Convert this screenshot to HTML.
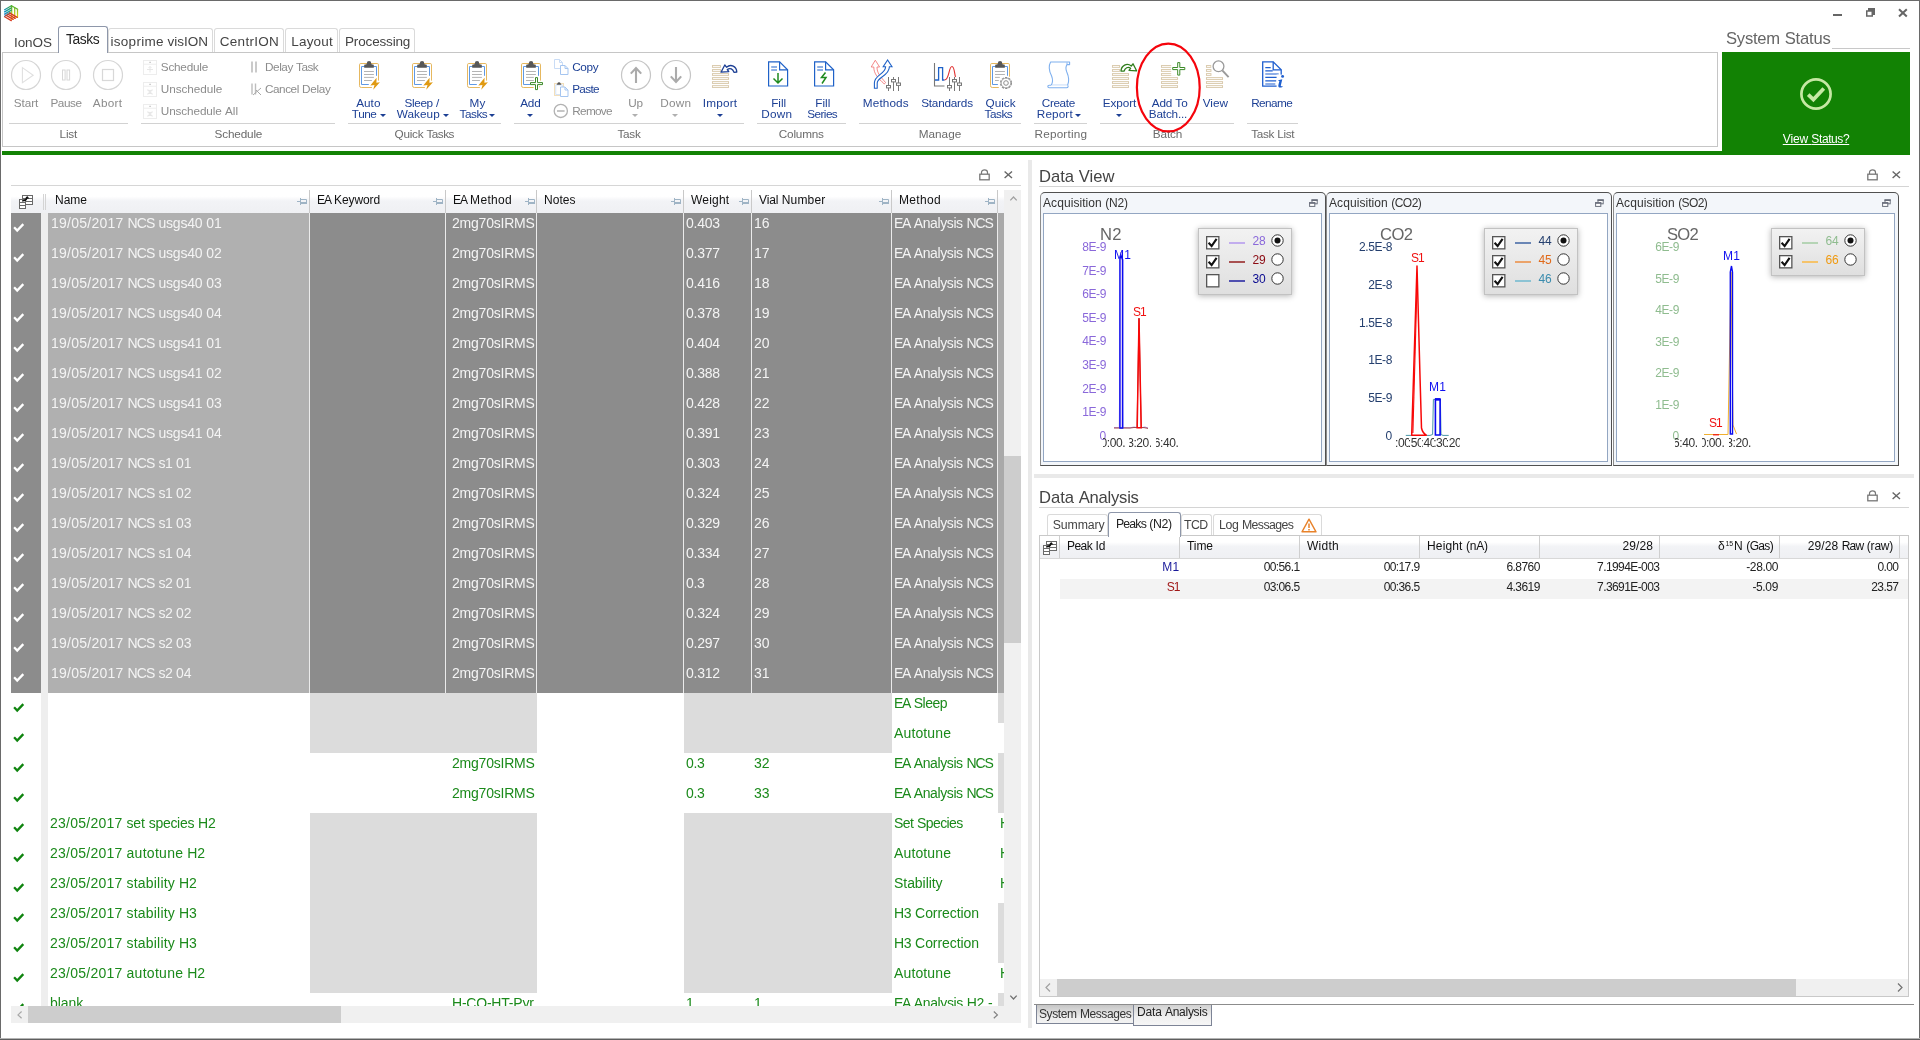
<!DOCTYPE html>
<html><head><meta charset="utf-8"><title>IonOS</title>
<style>
html,body{margin:0;padding:0;background:#fff;}
body{width:1920px;height:1040px;position:relative;overflow:hidden;font-family:"Liberation Sans",sans-serif;}
.t{position:absolute;white-space:nowrap;}
.r{position:absolute;box-sizing:border-box;}
svg{overflow:visible;}
</style></head><body><div id="root" style="position:absolute;left:0;top:0;width:1920px;height:1040px;will-change:transform;">

<div class="r" style="left:0px;top:0px;width:1920px;height:1px;background:#6a6a6a;"></div>
<div class="r" style="left:0px;top:0px;width:1px;height:1040px;background:#6a6a6a;"></div>
<div class="r" style="left:1919px;top:0px;width:1px;height:1040px;background:#6a6a6a;"></div>
<div class="r" style="left:0px;top:1039px;width:1920px;height:1px;background:#5e5e5e;"></div>
<div class="r" style="left:0px;top:1038px;width:1920px;height:1px;background:#b4b4b4;"></div>
<svg class="r" style="left:4px;top:5px;" width="15" height="17" viewBox="0 0 15 17"><defs>
<linearGradient id="lg1" x1="0" y1="1" x2="1" y2="0"><stop offset="0" stop-color="#0f82dc"/><stop offset="0.5" stop-color="#1f9a9a"/><stop offset="1" stop-color="#45ae35"/></linearGradient>
<linearGradient id="lg2" x1="0" y1="0" x2="0" y2="1"><stop offset="0" stop-color="#58b32a"/><stop offset="0.45" stop-color="#a8c81a"/><stop offset="1" stop-color="#f7d400"/></linearGradient>
</defs>
<g stroke-width="1.25" fill="none" stroke-linecap="round">
<path d="M7.5,0.7 L13.6,4.2" stroke="#58b32a"/>
<path d="M7.7,1 V14.4 M10.7,2.6 V13.4 M13.5,4.3 V12.4" stroke="url(#lg2)"/>
<path d="M0.6,4.7 L7.4,0.7 M0.6,6.9 L7.4,2.9 M0.6,9.1 L7.4,5.1 M0.6,11.3 L6.4,7.9" stroke="url(#lg1)"/>
<path d="M0.6,11.7 L7.3,15.6 M1.8,10.1 L9.2,14.4 M3.6,9 L11.2,13.4 M5.4,7.9 L13.2,12.4" stroke="#d8391d"/>
</g>
</svg>
<div class="r" style="left:1833px;top:14px;width:9px;height:2px;background:#666;"></div>
<svg class="r" style="left:1866px;top:8px;" width="9" height="9" viewBox="0 0 9 9"><rect x="2.5" y="0.5" width="6" height="6" fill="#666" stroke="#666"/><rect x="0.75" y="3" width="5.5" height="5" fill="#fff" stroke="#666" stroke-width="1.5"/></svg>
<svg class="r" style="left:1898px;top:8px;" width="10" height="10" viewBox="0 0 10 10"><path d="M1,1.2 L8.8,8.6 M8.8,1.2 L1,8.6" stroke="#666" stroke-width="2"/></svg>
<div class="r" style="left:108px;top:28px;width:105px;height:24px;background:#fff;border:1px solid #dadada;border-bottom:none;border-radius:3px 3px 0 0;"></div>
<div class="r" style="left:214px;top:28px;width:70px;height:24px;background:#fff;border:1px solid #dadada;border-bottom:none;border-radius:3px 3px 0 0;"></div>
<div class="r" style="left:285px;top:28px;width:53px;height:24px;background:#fff;border:1px solid #dadada;border-bottom:none;border-radius:3px 3px 0 0;"></div>
<div class="r" style="left:339px;top:28px;width:76px;height:24px;background:#fff;border:1px solid #dadada;border-bottom:none;border-radius:3px 3px 0 0;"></div>
<div class="r" style="left:2px;top:52px;width:1716px;height:95px;background:#fff;border:1px solid #c6c6c6;"></div>
<div class="r" style="left:58px;top:26px;width:50px;height:27px;background:#fff;border:1px solid #8e97aa;border-bottom:none;border-radius:3px 3px 0 0;z-index:3;"></div>
<div class="t" style="left:14.00px;top:33.00px;font-size:13.50px;line-height:19px;height:19px;color:#444;"><span style="letter-spacing:-0.086px">IonOS</span></div>
<div class="t" style="left:66.00px;top:30.00px;font-size:13.80px;line-height:19px;height:19px;color:#222;z-index:4;"><span style="letter-spacing:-0.395px">Tasks</span></div>
<div class="t" style="left:110.50px;top:32.00px;font-size:13.50px;line-height:19px;height:19px;color:#444;word-spacing:0.060px;"><span style="letter-spacing:0.281px">isoprime</span> <span style="letter-spacing:0.004px">visION</span></div>
<div class="t" style="left:219.80px;top:32.00px;font-size:13.50px;line-height:19px;height:19px;color:#444;"><span style="letter-spacing:0.273px">CentrION</span></div>
<div class="t" style="left:291.20px;top:32.00px;font-size:13.50px;line-height:19px;height:19px;color:#444;"><span style="letter-spacing:0.211px">Layout</span></div>
<div class="t" style="left:345.00px;top:32.00px;font-size:13.50px;line-height:19px;height:19px;color:#444;"><span style="letter-spacing:-0.158px">Processing</span></div>
<div class="t" style="left:1726.00px;top:27.00px;font-size:16.60px;line-height:23px;height:23px;color:#666;word-spacing:0.045px;"><span style="letter-spacing:-0.228px">System</span> <span style="letter-spacing:-0.171px">Status</span></div>
<div class="r" style="left:1832px;top:48px;width:78px;height:1px;background:#c8c8c8;"></div>
<div class="r" style="left:1722px;top:52px;width:188px;height:103px;background:#128204;"></div>
<div class="r" style="left:2px;top:151px;width:1721px;height:4px;background:#128204;"></div>
<svg class="r" style="left:1800px;top:78px;" width="32" height="32" viewBox="0 0 32 32"><circle cx="16" cy="16" r="14.6" fill="none" stroke="#c6e8a4" stroke-width="2.7"/><path d="M8.2,16.6 L13.4,21.6 L23.8,10.6" fill="none" stroke="#c6e8a4" stroke-width="3.7"/></svg>
<div class="t" style="left:1782.78px;top:130.00px;font-size:12.00px;line-height:18px;height:18px;color:#fff;word-spacing:-0.047px;text-decoration:underline;"><span style="letter-spacing:-0.129px">View</span> <span style="letter-spacing:-0.403px">Status?</span></div>
<div class="r" style="left:9px;top:123px;width:119px;height:1px;background:#d2d2d2;"></div>
<div class="t" style="left:59.50px;top:125.00px;font-size:11.75px;line-height:17px;height:17px;color:#6b6b6b;"><span style="letter-spacing:-0.146px">List</span></div>
<div class="r" style="left:141px;top:123px;width:194px;height:1px;background:#d2d2d2;"></div>
<div class="t" style="left:214.50px;top:125.00px;font-size:11.75px;line-height:17px;height:17px;color:#6b6b6b;"><span style="letter-spacing:-0.162px">Schedule</span></div>
<div class="r" style="left:348px;top:123px;width:153px;height:1px;background:#d2d2d2;"></div>
<div class="t" style="left:394.50px;top:125.00px;font-size:11.75px;line-height:17px;height:17px;color:#6b6b6b;word-spacing:-0.124px;"><span style="letter-spacing:-0.228px">Quick</span> <span style="letter-spacing:-0.554px">Tasks</span></div>
<div class="r" style="left:514px;top:123px;width:230px;height:1px;background:#d2d2d2;"></div>
<div class="t" style="left:617.50px;top:125.00px;font-size:11.75px;line-height:17px;height:17px;color:#6b6b6b;"><span style="letter-spacing:-0.290px">Task</span></div>
<div class="r" style="left:757px;top:123px;width:89px;height:1px;background:#d2d2d2;"></div>
<div class="t" style="left:778.80px;top:125.00px;font-size:11.75px;line-height:17px;height:17px;color:#6b6b6b;"><span style="letter-spacing:-0.195px">Columns</span></div>
<div class="r" style="left:859px;top:123px;width:162px;height:1px;background:#d2d2d2;"></div>
<div class="t" style="left:918.80px;top:125.00px;font-size:11.75px;line-height:17px;height:17px;color:#6b6b6b;"><span style="letter-spacing:-0.011px">Manage</span></div>
<div class="r" style="left:1034px;top:123px;width:53px;height:1px;background:#d2d2d2;"></div>
<div class="t" style="left:1034.50px;top:125.00px;font-size:11.75px;line-height:17px;height:17px;color:#6b6b6b;"><span style="letter-spacing:0.195px">Reporting</span></div>
<div class="r" style="left:1100px;top:123px;width:134px;height:1px;background:#d2d2d2;"></div>
<div class="t" style="left:1152.80px;top:125.00px;font-size:11.75px;line-height:17px;height:17px;color:#6b6b6b;"><span style="letter-spacing:-0.129px">Batch</span></div>
<div class="r" style="left:1247px;top:123px;width:51px;height:1px;background:#d2d2d2;"></div>
<div class="t" style="left:1251.20px;top:125.00px;font-size:11.75px;line-height:17px;height:17px;color:#6b6b6b;word-spacing:-0.077px;"><span style="letter-spacing:-0.356px">Task</span> <span style="letter-spacing:-0.277px">List</span></div>
<svg class="r" style="left:10px;top:59px;" width="32" height="32" viewBox="0 0 32 32"><circle cx="16" cy="16" r="14.5" fill="#fff" stroke="#d6d6d6" stroke-width="1.2"/><path d="M12.4,8.6 L23.2,16.2 L12.4,23.6 Z" fill="none" stroke="#e0e0e0" stroke-width="1.1"/></svg>
<svg class="r" style="left:50px;top:59px;" width="32" height="32" viewBox="0 0 32 32"><circle cx="16" cy="16" r="14.5" fill="#fff" stroke="#d6d6d6" stroke-width="1.2"/><rect x="12.5" y="11" width="2.6" height="10" fill="none" stroke="#d8d8d8"/><rect x="17" y="11" width="2.6" height="10" fill="none" stroke="#d8d8d8"/></svg>
<svg class="r" style="left:92px;top:59px;" width="32" height="32" viewBox="0 0 32 32"><circle cx="16" cy="16" r="14.5" fill="#fff" stroke="#d6d6d6" stroke-width="1.2"/><rect x="10.5" y="10.5" width="11" height="11" fill="none" stroke="#d8d8d8" stroke-width="1.2"/></svg>
<div class="t" style="left:13.80px;top:94.00px;font-size:11.75px;line-height:17px;height:17px;color:#8c8c8c;"><span style="letter-spacing:-0.083px">Start</span></div>
<div class="t" style="left:50.50px;top:94.00px;font-size:11.75px;line-height:17px;height:17px;color:#8c8c8c;"><span style="letter-spacing:-0.464px">Pause</span></div>
<div class="t" style="left:92.80px;top:94.00px;font-size:11.75px;line-height:17px;height:17px;color:#8c8c8c;"><span style="letter-spacing:0.263px">Abort</span></div>
<svg class="r" style="left:143px;top:60px;" width="15" height="15" viewBox="0 0 15 15"><rect x="0.5" y="0.5" width="13" height="14" fill="#fff" stroke="#ededed"/><path d="M0.5,4.2 H13.5" stroke="#ededed"/><path d="M7,6.5 V12.5 M4,9.5 H10 M5.5,8 L7,6.5 L8.5,8" fill="none" stroke="#e4e4e4" stroke-width="0.9"/><rect x="6.2" y="1.8" width="1.8" height="0.9" fill="#b8b8b8"/></svg>
<svg class="r" style="left:143px;top:82px;" width="15" height="15" viewBox="0 0 15 15"><rect x="0.5" y="0.5" width="13" height="14" fill="#fff" stroke="#ededed"/><path d="M0.5,4.2 H13.5" stroke="#ededed"/><path d="M4.5,8 L9.5,12 M9.5,8 L4.5,12 M4.5,8 Q7,9.2 9.5,8 M4.5,12 Q7,10.8 9.5,12" fill="none" stroke="#e4e4e4" stroke-width="0.9"/><rect x="6.2" y="1.8" width="1.8" height="0.9" fill="#b8b8b8"/></svg>
<svg class="r" style="left:143px;top:104px;" width="15" height="15" viewBox="0 0 15 15"><rect x="0.5" y="0.5" width="13" height="14" fill="#fff" stroke="#ededed"/><path d="M0.5,4.2 H13.5" stroke="#ededed"/><path d="M4.5,8 L9.5,12 M9.5,8 L4.5,12 M4.5,8 Q7,9.2 9.5,8 M4.5,12 Q7,10.8 9.5,12" fill="none" stroke="#e4e4e4" stroke-width="0.9"/><rect x="6.2" y="1.8" width="1.8" height="0.9" fill="#b8b8b8"/></svg>
<div class="t" style="left:160.80px;top:58.00px;font-size:11.75px;line-height:17px;height:17px;color:#8c8c8c;"><span style="letter-spacing:-0.225px">Schedule</span></div>
<div class="t" style="left:160.80px;top:80.00px;font-size:11.75px;line-height:17px;height:17px;color:#8c8c8c;"><span style="letter-spacing:-0.066px">Unschedule</span></div>
<div class="t" style="left:160.80px;top:102.00px;font-size:11.75px;line-height:17px;height:17px;color:#8c8c8c;word-spacing:-0.028px;"><span style="letter-spacing:-0.124px">Unschedule</span> <span style="letter-spacing:0.095px">All</span></div>
<svg class="r" style="left:251px;top:61px;" width="8" height="12" viewBox="0 0 8 12"><path d="M1,0.5 V11.5 M5,0.5 V11.5" stroke="#bdbdbd" stroke-width="1.6"/></svg>
<svg class="r" style="left:251px;top:83px;" width="11" height="13" viewBox="0 0 11 13"><path d="M1,0.5 V11.5 M4.5,0.5 V11.5" stroke="#bdbdbd" stroke-width="1.4"/><path d="M2,12 L10,5 M5,7 L10,12" stroke="#a8a8a8" stroke-width="1"/></svg>
<div class="t" style="left:265.00px;top:58.00px;font-size:11.75px;line-height:17px;height:17px;color:#8c8c8c;word-spacing:-0.154px;"><span style="letter-spacing:-0.428px">Delay</span> <span style="letter-spacing:-0.493px">Task</span></div>
<div class="t" style="left:265.00px;top:80.00px;font-size:11.75px;line-height:17px;height:17px;color:#8c8c8c;word-spacing:-0.090px;"><span style="letter-spacing:-0.455px">Cancel</span> <span style="letter-spacing:-0.313px">Delay</span></div>
<svg class="r" style="left:358px;top:60px;" width="24" height="30" viewBox="0 0 24 30"><path d="M13.9,27.5 H3.3 Q1.5,27.5 1.5,25.7 V4.8 Q1.5,3.5 2.8,3.5 H19.2 Q20.5,3.5 20.5,4.8 V20.6" fill="none" stroke="#e6b860" stroke-width="1"/>
<path d="M10.8,24.5 H3.5 V6.5 H18.5 V15.8" fill="none" stroke="#5f99e4" stroke-width="1"/>
<path d="M6.2,7.7 V4.7 L8.5,4.2 L9.4,1.6 Q11,0.4 12.7,1.6 L13.5,4.2 L15.8,4.7 V7.7 Z" fill="#575757"/>
<path d="M6,11.5 H15.9 M6,14.5 H15.9 M6,17.4 H15.9 M6,20.5 H13.9" stroke="#b4b4b4" stroke-width="1"/><path d="M18.6,17.8 L12.3,25.5 L16.5,25 L15.2,29.8 L21.9,22.2 L18.4,22.7 Z" fill="#e09a12"/></svg>
<svg class="r" style="left:411px;top:60px;" width="24" height="30" viewBox="0 0 24 30"><path d="M13.9,27.5 H3.3 Q1.5,27.5 1.5,25.7 V4.8 Q1.5,3.5 2.8,3.5 H19.2 Q20.5,3.5 20.5,4.8 V20.6" fill="none" stroke="#e6b860" stroke-width="1"/>
<path d="M10.8,24.5 H3.5 V6.5 H18.5 V15.8" fill="none" stroke="#5f99e4" stroke-width="1"/>
<path d="M6.2,7.7 V4.7 L8.5,4.2 L9.4,1.6 Q11,0.4 12.7,1.6 L13.5,4.2 L15.8,4.7 V7.7 Z" fill="#575757"/>
<path d="M6,11.5 H15.9 M6,14.5 H15.9 M6,17.4 H15.9 M6,20.5 H13.9" stroke="#b4b4b4" stroke-width="1"/><path d="M18.6,17.8 L12.3,25.5 L16.5,25 L15.2,29.8 L21.9,22.2 L18.4,22.7 Z" fill="#e09a12"/></svg>
<svg class="r" style="left:466px;top:60px;" width="24" height="30" viewBox="0 0 24 30"><path d="M13.9,27.5 H3.3 Q1.5,27.5 1.5,25.7 V4.8 Q1.5,3.5 2.8,3.5 H19.2 Q20.5,3.5 20.5,4.8 V20.6" fill="none" stroke="#e6b860" stroke-width="1"/>
<path d="M10.8,24.5 H3.5 V6.5 H18.5 V15.8" fill="none" stroke="#5f99e4" stroke-width="1"/>
<path d="M6.2,7.7 V4.7 L8.5,4.2 L9.4,1.6 Q11,0.4 12.7,1.6 L13.5,4.2 L15.8,4.7 V7.7 Z" fill="#575757"/>
<path d="M6,11.5 H15.9 M6,14.5 H15.9 M6,17.4 H15.9 M6,20.5 H13.9" stroke="#b4b4b4" stroke-width="1"/><path d="M18.6,17.8 L12.3,25.5 L16.5,25 L15.2,29.8 L21.9,22.2 L18.4,22.7 Z" fill="#e09a12"/></svg>
<svg class="r" style="left:520px;top:60px;" width="24" height="30" viewBox="0 0 24 30"><path d="M13.6,27.5 H3.3 Q1.5,27.5 1.5,25.7 V4.8 Q1.5,3.5 2.8,3.5 H19.2 Q20.5,3.5 20.5,4.8 V20.6" fill="none" stroke="#e6b860" stroke-width="1"/>
<path d="M10.8,24.5 H3.5 V6.5 H18.5 V15.8" fill="none" stroke="#5f99e4" stroke-width="1"/>
<path d="M6.2,7.7 V4.7 L8.5,4.2 L9.4,1.6 Q11,0.4 12.7,1.6 L13.5,4.2 L15.8,4.7 V7.7 Z" fill="#575757"/>
<path d="M6,11.5 H15.9 M6,14.5 H15.9 M6,17.4 H13.8 M6,20.5 H13.8" stroke="#b4b4b4" stroke-width="1"/><path d="M15.5,17.6 h2 v5 h5 v2 h-5 v5 h-2 v-5 h-5 v-2 h5 z" fill="#fff" stroke="#3c8a28" stroke-width="1"/><path d="M19,26.2 h1.5 l-1.5,1.5 z" fill="#e9bf6f"/></svg>
<div class="t" style="left:356.20px;top:94.00px;font-size:11.75px;line-height:17px;height:17px;color:#1c3f94;"><span style="letter-spacing:0.032px">Auto</span></div>
<div class="t" style="left:351.80px;top:105.00px;font-size:11.75px;line-height:17px;height:17px;color:#1c3f94;"><span style="letter-spacing:-0.412px">Tune</span></div>
<svg class="r" style="left:379.5px;top:113.5px;" width="6" height="3" viewBox="0 0 6 3"><path d="M0,0 H6 L3,3 Z" fill="#1c3f94"/></svg>
<div class="t" style="left:404.50px;top:94.00px;font-size:11.75px;line-height:17px;height:17px;color:#1c3f94;word-spacing:-0.053px;"><span style="letter-spacing:-0.367px">Sleep</span> <span style="letter-spacing:1.304px">/</span></div>
<div class="t" style="left:396.80px;top:105.00px;font-size:11.75px;line-height:17px;height:17px;color:#1c3f94;"><span style="letter-spacing:0.055px">Wakeup</span></div>
<svg class="r" style="left:442.8px;top:113.5px;" width="6" height="3" viewBox="0 0 6 3"><path d="M0,0 H6 L3,3 Z" fill="#1c3f94"/></svg>
<div class="t" style="left:469.50px;top:94.00px;font-size:11.75px;line-height:17px;height:17px;color:#1c3f94;"><span style="letter-spacing:0.168px">My</span></div>
<div class="t" style="left:459.50px;top:105.00px;font-size:11.75px;line-height:17px;height:17px;color:#1c3f94;"><span style="letter-spacing:-0.467px">Tasks</span></div>
<svg class="r" style="left:489px;top:113.5px;" width="6" height="3" viewBox="0 0 6 3"><path d="M0,0 H6 L3,3 Z" fill="#1c3f94"/></svg>
<div class="t" style="left:520.20px;top:94.00px;font-size:11.75px;line-height:17px;height:17px;color:#1c3f94;"><span style="letter-spacing:-0.203px">Add</span></div>
<svg class="r" style="left:527px;top:114.0px;" width="6" height="3" viewBox="0 0 6 3"><path d="M0,0 H6 L3,3 Z" fill="#1c3f94"/></svg>
<svg class="r" style="left:554px;top:59px;" width="15" height="17" viewBox="0 0 15 17"><path d="M0.5,0.5 h5 l3,3 v6 h-8 z" fill="#fff" stroke="#c9dcf6"/><path d="M5.5,0.5 v3 h3" fill="none" stroke="#c9dcf6"/><path d="M6.5,6.5 h4.5 l3,3 v6 h-7.5 z" fill="#fff" stroke="#a5c5f0"/><path d="M11,6.5 v3 h3" fill="none" stroke="#a5c5f0"/></svg>
<svg class="r" style="left:554px;top:81px;" width="15" height="17" viewBox="0 0 15 17"><rect x="0.5" y="2.5" width="9" height="12" fill="#fff" stroke="#f3dfbb"/><rect x="1.8" y="4" width="6.5" height="9.5" fill="#fff" stroke="#c9dcf6" stroke-width="0.8"/><path d="M2.5,3.8 L4,1.6 Q5,0.8 6,1.6 L7.5,3.8 Z" fill="#555"/><path d="M6.5,6 h4.5 l3,3 v6.5 h-7.5 z" fill="#fff" stroke="#a5c5f0"/><path d="M11,6 v3 h3" fill="none" stroke="#a5c5f0"/></svg>
<svg class="r" style="left:553px;top:103px;" width="16" height="16" viewBox="0 0 16 16"><circle cx="7.8" cy="7.9" r="6.6" fill="#fff" stroke="#b2b2b2" stroke-width="1.3"/><path d="M4,8 H11.6" stroke="#c0c0c0" stroke-width="1.8"/></svg>
<div class="t" style="left:572.20px;top:58.00px;font-size:11.75px;line-height:17px;height:17px;color:#1c3f94;"><span style="letter-spacing:-0.333px">Copy</span></div>
<div class="t" style="left:572.20px;top:80.00px;font-size:11.75px;line-height:17px;height:17px;color:#1c3f94;"><span style="letter-spacing:-0.669px">Paste</span></div>
<div class="t" style="left:572.30px;top:102.00px;font-size:11.75px;line-height:17px;height:17px;color:#8c8c8c;"><span style="letter-spacing:-0.692px">Remove</span></div>
<svg class="r" style="left:620px;top:59px;" width="32" height="32" viewBox="0 0 32 32"><circle cx="16" cy="16" r="14.5" fill="#fff" stroke="#c6c6c6" stroke-width="1.2"/><path d="M16,23.9 V9 M10.8,14.6 L16,9 L21.2,14.6" fill="none" stroke="#ababab" stroke-width="2.1" stroke-linejoin="miter"/></svg>
<svg class="r" style="left:660px;top:59px;" width="32" height="32" viewBox="0 0 32 32"><circle cx="16" cy="16" r="14.5" fill="#fff" stroke="#c6c6c6" stroke-width="1.2"/><path d="M16,8.1 V23 M10.8,17.4 L16,23 L21.2,17.4" fill="none" stroke="#ababab" stroke-width="2.1" stroke-linejoin="miter"/></svg>
<div class="t" style="left:628.30px;top:94.00px;font-size:11.75px;line-height:17px;height:17px;color:#8c8c8c;"><span style="letter-spacing:-0.310px">Up</span></div>
<svg class="r" style="left:632px;top:114.0px;" width="6" height="3" viewBox="0 0 6 3"><path d="M0,0 H6 L3,3 Z" fill="#b0b0b0"/></svg>
<div class="t" style="left:660.20px;top:94.00px;font-size:11.75px;line-height:17px;height:17px;color:#8c8c8c;"><span style="letter-spacing:0.240px">Down</span></div>
<svg class="r" style="left:672px;top:114.0px;" width="6" height="3" viewBox="0 0 6 3"><path d="M0,0 H6 L3,3 Z" fill="#b0b0b0"/></svg>
<svg class="r" style="left:712px;top:65px;" width="18" height="24" viewBox="0 0 18 24"><rect x="0.45" y="0.55" width="8" height="1.8" fill="#fff" stroke="#d9c9ab" stroke-width="0.95"/><rect x="0.45" y="4.57" width="8" height="1.8" fill="#fff" stroke="#d9c9ab" stroke-width="0.95"/><rect x="0.45" y="8.59" width="16.1" height="1.8" fill="#fff" stroke="#d9c9ab" stroke-width="0.95"/><rect x="0.45" y="12.61" width="16.1" height="1.8" fill="#fff" stroke="#d9c9ab" stroke-width="0.95"/><rect x="0.45" y="16.63" width="16.1" height="1.8" fill="#fff" stroke="#d9c9ab" stroke-width="0.95"/><rect x="0.45" y="20.65" width="16.1" height="1.8" fill="#fff" stroke="#d9c9ab" stroke-width="0.95"/></svg>
<svg class="r" style="left:719px;top:62px;" width="20" height="13" viewBox="0 0 20 13"><path d="M17.8,10 C17.5,4.5 12,1.5 7.5,5.2 L5.8,3 L2,10.2 L9.8,9.6 L8.3,7.5 C11,5.6 14,7 15,10.4 Z" fill="#fff" stroke="#1c3f94" stroke-width="1.3" stroke-linejoin="round"/></svg>
<div class="t" style="left:702.80px;top:94.00px;font-size:11.75px;line-height:17px;height:17px;color:#1c3f94;"><span style="letter-spacing:0.183px">Import</span></div>
<svg class="r" style="left:717px;top:114.0px;" width="6" height="3" viewBox="0 0 6 3"><path d="M0,0 H6 L3,3 Z" fill="#1c3f94"/></svg>
<svg class="r" style="left:768px;top:61px;" width="21" height="27" viewBox="0 0 21 27"><path d="M0.6,0.8 h11 l8,8 v16.2 h-19 z" fill="#fff" stroke="#1f62c8" stroke-width="1.2"/><path d="M11.6,0.8 v8 h8" fill="none" stroke="#1f62c8" stroke-width="1.2"/><path d="M3.2,6 h5.8 M3.2,9 h5.8" stroke="#1f62c8" stroke-width="1.1"/><path d="M10,12 V21.5 M5.5,17.5 L10,22 L14.5,17.5" fill="none" stroke="#1e8a1e" stroke-width="1.5"/></svg>
<svg class="r" style="left:814px;top:61px;" width="21" height="27" viewBox="0 0 21 27"><path d="M0.6,0.8 h11 l8,8 v16.2 h-19 z" fill="#fff" stroke="#1f62c8" stroke-width="1.2"/><path d="M11.6,0.8 v8 h8" fill="none" stroke="#1f62c8" stroke-width="1.2"/><path d="M3.2,6 h5.8 M3.2,9 h5.8" stroke="#1f62c8" stroke-width="1.1"/><path d="M11.5,11.5 L7.5,16.5 H12 L8,22.5" fill="none" stroke="#1e8a1e" stroke-width="1.5"/></svg>
<div class="t" style="left:771.20px;top:94.00px;font-size:11.75px;line-height:17px;height:17px;color:#1c3f94;"><span style="letter-spacing:-0.002px">Fill</span></div>
<div class="t" style="left:761.20px;top:105.00px;font-size:11.75px;line-height:17px;height:17px;color:#1c3f94;"><span style="letter-spacing:0.240px">Down</span></div>
<div class="t" style="left:815.20px;top:94.00px;font-size:11.75px;line-height:17px;height:17px;color:#1c3f94;"><span style="letter-spacing:0.073px">Fill</span></div>
<div class="t" style="left:807.20px;top:105.00px;font-size:11.75px;line-height:17px;height:17px;color:#1c3f94;"><span style="letter-spacing:-0.551px">Series</span></div>
<svg class="r" style="left:870px;top:59px;" width="24" height="31" viewBox="0 0 24 31"><path d="M3.8,8 H1.2 L5.3,1.2 L9.6,8 H7 C7,14 10,17 15.5,23.5 L14.3,25 C8,19 3.8,15 3.8,8 Z" fill="#fff" stroke="#f27c7c" stroke-width="0.9" stroke-linejoin="round"/><path d="M4.4,29.3 V24 C4.4,16 15.6,15 15.6,7.8 H13.2 L17.6,1 L22,7.8 H19.4 C19.4,17 7.2,18 7.2,24 V29.3 Z" fill="#fff" stroke="#1f62c8" stroke-width="1.1" stroke-linejoin="miter"/></svg>
<svg class="r" style="left:886px;top:77px;" width="15" height="14" viewBox="0 0 15 14"><path d="M2.5,0 V14 M7.5,0 V14 M12.5,0 V14" stroke="#777" stroke-width="1"/><rect x="0.5" y="8.5" width="4" height="2.4" fill="#fff" stroke="#777"/><rect x="5.5" y="2.5" width="4" height="2.4" fill="#fff" stroke="#777"/><rect x="10.5" y="6" width="4" height="2.4" fill="#fff" stroke="#777"/></svg>
<div class="t" style="left:862.80px;top:94.00px;font-size:11.75px;line-height:17px;height:17px;color:#1c3f94;"><span style="letter-spacing:0.133px">Methods</span></div>
<svg class="r" style="left:933px;top:62px;" width="30" height="28" viewBox="0 0 30 28"><path d="M1.5,1 V24 H11.5" fill="none" stroke="#777" stroke-width="1.1"/><path d="M2,18 H5.6 V5.6 H9.6 V18 H11.5" fill="none" stroke="#1f62c8" stroke-width="1.3"/><path d="M11.5,18 C16.5,18 15.5,4.5 19,4.5 C21.5,4.5 21.5,12.5 22.5,15" fill="none" stroke="#e03030" stroke-width="1.1"/></svg>
<svg class="r" style="left:947px;top:77px;" width="15" height="14" viewBox="0 0 15 14"><path d="M2.5,0 V14 M7.5,0 V14 M12.5,0 V14" stroke="#777" stroke-width="1"/><rect x="0.5" y="8.5" width="4" height="2.4" fill="#fff" stroke="#777"/><rect x="5.5" y="2.5" width="4" height="2.4" fill="#fff" stroke="#777"/><rect x="10.5" y="6" width="4" height="2.4" fill="#fff" stroke="#777"/></svg>
<div class="t" style="left:921.20px;top:94.00px;font-size:11.75px;line-height:17px;height:17px;color:#1c3f94;"><span style="letter-spacing:-0.218px">Standards</span></div>
<svg class="r" style="left:989px;top:60px;" width="24" height="30" viewBox="0 0 24 30"><path d="M9.8,27.5 H3.3 Q1.5,27.5 1.5,25.7 V4.8 Q1.5,3.5 2.8,3.5 H19.2 Q20.5,3.5 20.5,4.8 V16.7" fill="none" stroke="#e6b860" stroke-width="1"/>
<path d="M8.9,24.5 H3.5 V6.5 H18.5 V15.8" fill="none" stroke="#5f99e4" stroke-width="1"/>
<path d="M6.2,7.7 V4.7 L8.5,4.2 L9.4,1.6 Q11,0.4 12.7,1.6 L13.5,4.2 L15.8,4.7 V7.7 Z" fill="#575757"/>
<path d="M6,11.5 H15.9 M6,14.5 H15.9 M6,17.4 H10.8 M6,20.5 H9.8" stroke="#b4b4b4" stroke-width="1"/><circle cx="17" cy="23" r="5.4" fill="#fff" stroke="#8e8e8e" stroke-width="1.3" stroke-dasharray="2.3 1.1"/><circle cx="17" cy="23" r="4.8" fill="none" stroke="#9a9a9a" stroke-width="0.7"/><circle cx="17" cy="23" r="2.3" fill="#fff" stroke="#8e8e8e" stroke-width="1"/></svg>
<div class="t" style="left:985.50px;top:94.00px;font-size:11.75px;line-height:17px;height:17px;color:#1c3f94;"><span style="letter-spacing:-0.007px">Quick</span></div>
<div class="t" style="left:984.50px;top:105.00px;font-size:11.75px;line-height:17px;height:17px;color:#1c3f94;"><span style="letter-spacing:-0.467px">Tasks</span></div>
<svg class="r" style="left:1047px;top:61px;" width="24" height="28" viewBox="0 0 24 28"><path d="M3.6,1 C0.8,6 2,10 4.6,15 C6.2,19 5.6,22 4.2,24.3 H20.6 C22.8,19 21.6,15 19.8,11 C18.4,7.5 19,5 20,3.6 L22.6,3.6 L22.6,1 Z" fill="#fff" stroke="#7fb0ee" stroke-width="1.1" stroke-linejoin="round"/><path d="M20,3.6 V1.4" stroke="#7fb0ee" stroke-width="0.9"/><path d="M4.2,24.3 H2.2 C0.4,24.3 0.4,26.7 2.2,26.7 H19.6 C21.2,26.7 21.6,25.3 20.6,24.3" fill="#fff" stroke="#7fb0ee" stroke-width="1.1"/></svg>
<div class="t" style="left:1041.80px;top:94.00px;font-size:11.75px;line-height:17px;height:17px;color:#1c3f94;"><span style="letter-spacing:-0.378px">Create</span></div>
<div class="t" style="left:1036.80px;top:105.00px;font-size:11.75px;line-height:17px;height:17px;color:#1c3f94;"><span style="letter-spacing:0.122px">Report</span></div>
<svg class="r" style="left:1074.5px;top:113.5px;" width="6" height="3" viewBox="0 0 6 3"><path d="M0,0 H6 L3,3 Z" fill="#1c3f94"/></svg>
<svg class="r" style="left:1112px;top:65.2px;" width="18" height="24" viewBox="0 0 18 24"><rect x="0.45" y="0.55" width="7.2" height="1.8" fill="#fff" stroke="#d9c9ab" stroke-width="0.95"/><rect x="0.45" y="4.57" width="7.2" height="1.8" fill="#fff" stroke="#d9c9ab" stroke-width="0.95"/><rect x="0.45" y="8.59" width="16.1" height="1.8" fill="#fff" stroke="#d9c9ab" stroke-width="0.95"/><rect x="0.45" y="12.61" width="16.1" height="1.8" fill="#fff" stroke="#d9c9ab" stroke-width="0.95"/><rect x="0.45" y="16.63" width="16.1" height="1.8" fill="#fff" stroke="#d9c9ab" stroke-width="0.95"/><rect x="0.45" y="20.65" width="16.1" height="1.8" fill="#fff" stroke="#d9c9ab" stroke-width="0.95"/></svg>
<svg class="r" style="left:1119px;top:61px;" width="20" height="13" viewBox="0 0 20 13"><path d="M2,10 C2.2,4.5 8,1.3 12.3,5 L14,2.8 L17.6,9.8 L10,9.4 L11.6,7.3 C9,5.4 6,6.8 5,10.2 Z" fill="#fff" stroke="#2f7d1c" stroke-width="1.3" stroke-linejoin="round"/></svg>
<div class="t" style="left:1102.80px;top:94.00px;font-size:11.75px;line-height:17px;height:17px;color:#1c3f94;"><span style="letter-spacing:-0.093px">Export</span></div>
<svg class="r" style="left:1116px;top:114.0px;" width="6" height="3" viewBox="0 0 6 3"><path d="M0,0 H6 L3,3 Z" fill="#1c3f94"/></svg>
<svg class="r" style="left:1161px;top:65.2px;" width="18" height="24" viewBox="0 0 18 24"><rect x="0.45" y="0.55" width="13.5" height="1.8" fill="#fff" stroke="#d9c9ab" stroke-width="0.95"/><rect x="0.45" y="4.57" width="13.5" height="1.8" fill="#fff" stroke="#d9c9ab" stroke-width="0.95"/><rect x="0.45" y="8.59" width="13.5" height="1.8" fill="#fff" stroke="#d9c9ab" stroke-width="0.95"/><rect x="0.45" y="12.61" width="16.1" height="1.8" fill="#fff" stroke="#d9c9ab" stroke-width="0.95"/><rect x="0.45" y="16.63" width="16.1" height="1.8" fill="#fff" stroke="#d9c9ab" stroke-width="0.95"/><rect x="0.45" y="20.65" width="16.1" height="1.8" fill="#fff" stroke="#d9c9ab" stroke-width="0.95"/></svg>
<svg class="r" style="left:1171px;top:61px;" width="16" height="16" viewBox="0 0 16 16"><rect x="0.2" y="0" width="15" height="14.8" fill="#fff"/><path d="M6.7,1.6 h2.1 v4.9 h5 v2.1 h-5 v5.5 h-2.1 v-5.5 h-5 v-2.1 h5 z" fill="#fff" stroke="#3c8a28" stroke-width="1"/></svg>
<div class="t" style="left:1151.80px;top:94.00px;font-size:11.75px;line-height:17px;height:17px;color:#1c3f94;word-spacing:-0.187px;"><span style="letter-spacing:-0.151px">Add</span> <span style="letter-spacing:0.029px">To</span></div>
<div class="t" style="left:1148.80px;top:105.00px;font-size:11.75px;line-height:17px;height:17px;color:#1c3f94;"><span style="letter-spacing:-0.180px">Batch...</span></div>
<svg class="r" style="left:1206px;top:65.2px;" width="18" height="24" viewBox="0 0 18 24"><rect x="0.45" y="0.55" width="4.5" height="1.8" fill="#fff" stroke="#d9c9ab" stroke-width="0.95"/><rect x="0.45" y="4.57" width="4.5" height="1.8" fill="#fff" stroke="#d9c9ab" stroke-width="0.95"/><rect x="0.45" y="8.59" width="4.5" height="1.8" fill="#fff" stroke="#d9c9ab" stroke-width="0.95"/><rect x="0.45" y="12.61" width="16.1" height="1.8" fill="#fff" stroke="#d9c9ab" stroke-width="0.95"/><rect x="0.45" y="16.63" width="16.1" height="1.8" fill="#fff" stroke="#d9c9ab" stroke-width="0.95"/><rect x="0.45" y="20.65" width="16.1" height="1.8" fill="#fff" stroke="#d9c9ab" stroke-width="0.95"/></svg>
<svg class="r" style="left:1211px;top:58px;" width="20" height="22" viewBox="0 0 20 22"><circle cx="7.5" cy="8.3" r="7" fill="#fff"/><circle cx="7.5" cy="8.3" r="5.4" fill="#fff" stroke="#9a9a9a" stroke-width="1.3"/><path d="M11.3,12.3 L17.6,19.2" stroke="#9a9a9a" stroke-width="1.9"/></svg>
<div class="t" style="left:1202.80px;top:94.00px;font-size:11.75px;line-height:17px;height:17px;color:#1c3f94;"><span style="letter-spacing:-0.064px">View</span></div>
<svg class="r" style="left:1262px;top:61px;" width="24" height="28" viewBox="0 0 24 28"><path d="M0.7,0.8 h10.5 l8,8 v16.4 h-18.5 z" fill="#fff" stroke="#1f5fcf" stroke-width="1.3"/><path d="M11.2,0.8 v8 h8" fill="none" stroke="#1f5fcf" stroke-width="1.3"/><path d="M3.3,6.7 h5.4 M3.3,9.8 h7.4 M3.3,13 h13.4 M3.3,16.4 h13 M3.3,19.8 h11 M3.3,23 h10" stroke="#1f5fcf" stroke-width="1.2"/><rect x="14.6" y="13.6" width="8" height="13" fill="#fff"/><circle cx="20.6" cy="15.4" r="1.45" fill="#1f5fcf"/><path d="M17.2,18.9 L20.3,18.3 L18.8,24.6 Q18.6,25.6 19.9,25.2 L20.6,25 L20.4,25.9 Q17.8,27.2 16.6,26 Q16,25.2 16.5,23.6 L17.4,20 L16.4,19.9 L16.6,19.1 Z" fill="#1f5fcf"/></svg>
<div class="t" style="left:1251.20px;top:94.00px;font-size:11.75px;line-height:17px;height:17px;color:#1c3f94;"><span style="letter-spacing:-0.569px">Rename</span></div>
<svg class="r" style="left:1136px;top:41px;z-index:9;" width="68" height="94" viewBox="0 0 68 94"><ellipse cx="32.3" cy="46.5" rx="31.4" ry="43.9" fill="none" stroke="#f5040c" stroke-width="2.2"/></svg>
<div class="r" style="left:11px;top:185px;width:1010px;height:1px;background:#d6d6d6;"></div>
<svg class="r" style="left:978.6px;top:169px;" width="11" height="12" viewBox="0 0 11 12"><path d="M2.5,5 V3.5 C2.5,0 8.5,0 8.5,3.5 V5" fill="none" stroke="#777" stroke-width="1.2"/><rect x="0.8" y="5.2" width="9.4" height="5.6" fill="#fff" stroke="#777" stroke-width="1.3"/></svg>
<svg class="r" style="left:1004px;top:171px;" width="9" height="8" viewBox="0 0 9 8"><path d="M0.6,0.5 L8,7 M8,0.5 L0.6,7" stroke="#666" stroke-width="1.4"/></svg>
<div class="r" style="left:11px;top:190px;width:993px;height:23px;background:linear-gradient(#ffffff 0%,#ffffff 28%,#f2f3f6 48%,#eff0f3 100%);"></div>
<div class="r" style="left:11px;top:213px;width:30px;height:480px;background:#8c8c8c;"></div>
<div class="r" style="left:41px;top:213px;width:7px;height:793px;background:#eeeeee;"></div>
<div class="r" style="left:48px;top:213px;width:262px;height:480px;background:#b0b0b0;"></div>
<div class="r" style="left:310px;top:213px;width:688px;height:480px;background:#8c8c8c;"></div>
<div class="r" style="left:998px;top:213px;width:6px;height:480px;background:#a9a9a9;"></div>
<div class="r" style="left:309px;top:190px;width:1px;height:23px;background:#c9c9c9;"></div>
<div class="r" style="left:309px;top:213px;width:1px;height:480px;background:#ebebeb;"></div>
<div class="r" style="left:445px;top:190px;width:1px;height:23px;background:#c9c9c9;"></div>
<div class="r" style="left:445px;top:213px;width:1px;height:480px;background:#ebebeb;"></div>
<div class="r" style="left:536px;top:190px;width:1px;height:23px;background:#c9c9c9;"></div>
<div class="r" style="left:536px;top:213px;width:1px;height:480px;background:#ebebeb;"></div>
<div class="r" style="left:683px;top:190px;width:1px;height:23px;background:#c9c9c9;"></div>
<div class="r" style="left:683px;top:213px;width:1px;height:480px;background:#ebebeb;"></div>
<div class="r" style="left:751px;top:190px;width:1px;height:23px;background:#c9c9c9;"></div>
<div class="r" style="left:751px;top:213px;width:1px;height:480px;background:#ebebeb;"></div>
<div class="r" style="left:891px;top:190px;width:1px;height:23px;background:#c9c9c9;"></div>
<div class="r" style="left:891px;top:213px;width:1px;height:480px;background:#ebebeb;"></div>
<div class="r" style="left:997px;top:190px;width:1px;height:23px;background:#c9c9c9;"></div>
<div class="r" style="left:997px;top:213px;width:1px;height:480px;background:#ebebeb;"></div>
<div class="r" style="left:43px;top:194px;width:1px;height:16px;background:#d4d4d4;"></div>
<div class="r" style="left:45px;top:194px;width:1px;height:16px;background:#d4d4d4;"></div>
<div class="t" style="left:55.00px;top:191.00px;font-size:12.00px;line-height:18px;height:18px;color:#111;"><span style="letter-spacing:-0.035px">Name</span></div>
<svg class="r" style="left:297px;top:198px;" width="10" height="8" viewBox="0 0 10 8"><path d="M0,3.5 H3 M3.5,0 V7 M4,1.5 H9.5 V4" fill="none" stroke="#9fb4c5" stroke-width="1"/><path d="M4,5 H10" stroke="#9fb4c5" stroke-width="2"/></svg>
<div class="t" style="left:317.00px;top:191.00px;font-size:12.00px;line-height:18px;height:18px;color:#111;word-spacing:-0.047px;"><span style="letter-spacing:-1.099px">EA</span> <span style="letter-spacing:-0.109px">Keyword</span></div>
<svg class="r" style="left:433px;top:198px;" width="10" height="8" viewBox="0 0 10 8"><path d="M0,3.5 H3 M3.5,0 V7 M4,1.5 H9.5 V4" fill="none" stroke="#9fb4c5" stroke-width="1"/><path d="M4,5 H10" stroke="#9fb4c5" stroke-width="2"/></svg>
<div class="t" style="left:453.00px;top:191.00px;font-size:12.00px;line-height:18px;height:18px;color:#111;word-spacing:-0.047px;"><span style="letter-spacing:-1.099px">EA</span> <span style="letter-spacing:0.328px">Method</span></div>
<svg class="r" style="left:525px;top:198px;" width="10" height="8" viewBox="0 0 10 8"><path d="M0,3.5 H3 M3.5,0 V7 M4,1.5 H9.5 V4" fill="none" stroke="#9fb4c5" stroke-width="1"/><path d="M4,5 H10" stroke="#9fb4c5" stroke-width="2"/></svg>
<div class="t" style="left:544.00px;top:191.00px;font-size:12.00px;line-height:18px;height:18px;color:#111;"><span style="letter-spacing:0.019px">Notes</span></div>
<svg class="r" style="left:671px;top:198px;" width="10" height="8" viewBox="0 0 10 8"><path d="M0,3.5 H3 M3.5,0 V7 M4,1.5 H9.5 V4" fill="none" stroke="#9fb4c5" stroke-width="1"/><path d="M4,5 H10" stroke="#9fb4c5" stroke-width="2"/></svg>
<div class="t" style="left:691.00px;top:191.00px;font-size:12.00px;line-height:18px;height:18px;color:#111;"><span style="letter-spacing:0.195px">Weight</span></div>
<svg class="r" style="left:739px;top:198px;" width="10" height="8" viewBox="0 0 10 8"><path d="M0,3.5 H3 M3.5,0 V7 M4,1.5 H9.5 V4" fill="none" stroke="#9fb4c5" stroke-width="1"/><path d="M4,5 H10" stroke="#9fb4c5" stroke-width="2"/></svg>
<div class="t" style="left:759.00px;top:191.00px;font-size:12.00px;line-height:18px;height:18px;color:#111;word-spacing:-0.047px;"><span style="letter-spacing:-0.106px">Vial</span> <span style="letter-spacing:0.184px">Number</span></div>
<svg class="r" style="left:879px;top:198px;" width="10" height="8" viewBox="0 0 10 8"><path d="M0,3.5 H3 M3.5,0 V7 M4,1.5 H9.5 V4" fill="none" stroke="#9fb4c5" stroke-width="1"/><path d="M4,5 H10" stroke="#9fb4c5" stroke-width="2"/></svg>
<div class="t" style="left:899.00px;top:191.00px;font-size:12.00px;line-height:18px;height:18px;color:#111;"><span style="letter-spacing:0.328px">Method</span></div>
<svg class="r" style="left:985px;top:198px;" width="10" height="8" viewBox="0 0 10 8"><path d="M0,3.5 H3 M3.5,0 V7 M4,1.5 H9.5 V4" fill="none" stroke="#9fb4c5" stroke-width="1"/><path d="M4,5 H10" stroke="#9fb4c5" stroke-width="2"/></svg>
<svg class="r" style="left:19px;top:195px;" width="15" height="15" viewBox="0 0 15 15"><rect x="3.5" y="0.5" width="10" height="9" fill="#fff" stroke="#6a6a6a"/><path d="M3.5,3.5 H13.5 M3.5,6.5 H13.5" stroke="#6a6a6a" stroke-width="1"/><rect x="0.5" y="4.5" width="6" height="9" fill="#fff" stroke="#6a6a6a"/><path d="M0.5,7.5 H6.5 M0.5,10.5 H6.5" stroke="#6a6a6a" stroke-width="1"/><path d="M3,5.8 C6,6 7.5,5 8,2.5" fill="none" stroke="#111" stroke-width="1.3"/><path d="M6,3.6 L8.2,1 L10.4,3.6 Z" fill="#111"/></svg>
<svg class="r" style="left:13.3px;top:223.3px;" width="12" height="10" viewBox="0 0 12 10"><path d="M1.1,4.3 L4.2,7.5 L10.3,1.1" fill="none" stroke="#fff" stroke-width="2.3"/></svg>
<div class="t" style="left:51.00px;top:213.00px;font-size:14.00px;line-height:20px;height:20px;color:#f4f4f4;word-spacing:0.014px;"><span style="letter-spacing:0.249px">19/05/2017</span> <span style="letter-spacing:-0.836px">NCS</span> <span style="letter-spacing:-0.208px">usgs40</span> <span style="letter-spacing:-0.105px">01</span></div>
<div class="r" style="left:452px;top:213px;width:84px;height:30px;overflow:hidden;">
<div class="t" style="left:0.00px;top:0.00px;font-size:14.00px;line-height:20px;height:20px;color:#f4f4f4;"><span style="letter-spacing:-0.217px">2mg70sIRMS</span></div>
</div>
<div class="t" style="left:686.00px;top:213.00px;font-size:14.00px;line-height:20px;height:20px;color:#f4f4f4;"><span style="letter-spacing:-0.244px">0.403</span></div>
<div class="t" style="left:754.00px;top:213.00px;font-size:14.00px;line-height:20px;height:20px;color:#f4f4f4;"><span style="letter-spacing:-0.105px">16</span></div>
<div class="t" style="left:894.00px;top:213.00px;font-size:14.00px;line-height:20px;height:20px;color:#f4f4f4;word-spacing:-0.094px;"><span style="letter-spacing:-1.366px">EA</span> <span style="letter-spacing:-0.395px">Analysis</span> <span style="letter-spacing:-1.085px">NCS</span></div>
<svg class="r" style="left:13.3px;top:253.3px;" width="12" height="10" viewBox="0 0 12 10"><path d="M1.1,4.3 L4.2,7.5 L10.3,1.1" fill="none" stroke="#fff" stroke-width="2.3"/></svg>
<div class="t" style="left:51.00px;top:243.00px;font-size:14.00px;line-height:20px;height:20px;color:#f4f4f4;word-spacing:0.014px;"><span style="letter-spacing:0.249px">19/05/2017</span> <span style="letter-spacing:-0.836px">NCS</span> <span style="letter-spacing:-0.208px">usgs40</span> <span style="letter-spacing:-0.105px">02</span></div>
<div class="r" style="left:452px;top:243px;width:84px;height:30px;overflow:hidden;">
<div class="t" style="left:0.00px;top:0.00px;font-size:14.00px;line-height:20px;height:20px;color:#f4f4f4;"><span style="letter-spacing:-0.217px">2mg70sIRMS</span></div>
</div>
<div class="t" style="left:686.00px;top:243.00px;font-size:14.00px;line-height:20px;height:20px;color:#f4f4f4;"><span style="letter-spacing:-0.244px">0.377</span></div>
<div class="t" style="left:754.00px;top:243.00px;font-size:14.00px;line-height:20px;height:20px;color:#f4f4f4;"><span style="letter-spacing:-0.105px">17</span></div>
<div class="t" style="left:894.00px;top:243.00px;font-size:14.00px;line-height:20px;height:20px;color:#f4f4f4;word-spacing:-0.094px;"><span style="letter-spacing:-1.366px">EA</span> <span style="letter-spacing:-0.395px">Analysis</span> <span style="letter-spacing:-1.085px">NCS</span></div>
<svg class="r" style="left:13.3px;top:283.3px;" width="12" height="10" viewBox="0 0 12 10"><path d="M1.1,4.3 L4.2,7.5 L10.3,1.1" fill="none" stroke="#fff" stroke-width="2.3"/></svg>
<div class="t" style="left:51.00px;top:273.00px;font-size:14.00px;line-height:20px;height:20px;color:#f4f4f4;word-spacing:0.014px;"><span style="letter-spacing:0.249px">19/05/2017</span> <span style="letter-spacing:-0.836px">NCS</span> <span style="letter-spacing:-0.208px">usgs40</span> <span style="letter-spacing:-0.105px">03</span></div>
<div class="r" style="left:452px;top:273px;width:84px;height:30px;overflow:hidden;">
<div class="t" style="left:0.00px;top:0.00px;font-size:14.00px;line-height:20px;height:20px;color:#f4f4f4;"><span style="letter-spacing:-0.217px">2mg70sIRMS</span></div>
</div>
<div class="t" style="left:686.00px;top:273.00px;font-size:14.00px;line-height:20px;height:20px;color:#f4f4f4;"><span style="letter-spacing:-0.244px">0.416</span></div>
<div class="t" style="left:754.00px;top:273.00px;font-size:14.00px;line-height:20px;height:20px;color:#f4f4f4;"><span style="letter-spacing:-0.105px">18</span></div>
<div class="t" style="left:894.00px;top:273.00px;font-size:14.00px;line-height:20px;height:20px;color:#f4f4f4;word-spacing:-0.094px;"><span style="letter-spacing:-1.366px">EA</span> <span style="letter-spacing:-0.395px">Analysis</span> <span style="letter-spacing:-1.085px">NCS</span></div>
<svg class="r" style="left:13.3px;top:313.3px;" width="12" height="10" viewBox="0 0 12 10"><path d="M1.1,4.3 L4.2,7.5 L10.3,1.1" fill="none" stroke="#fff" stroke-width="2.3"/></svg>
<div class="t" style="left:51.00px;top:303.00px;font-size:14.00px;line-height:20px;height:20px;color:#f4f4f4;word-spacing:0.014px;"><span style="letter-spacing:0.249px">19/05/2017</span> <span style="letter-spacing:-0.836px">NCS</span> <span style="letter-spacing:-0.208px">usgs40</span> <span style="letter-spacing:-0.105px">04</span></div>
<div class="r" style="left:452px;top:303px;width:84px;height:30px;overflow:hidden;">
<div class="t" style="left:0.00px;top:0.00px;font-size:14.00px;line-height:20px;height:20px;color:#f4f4f4;"><span style="letter-spacing:-0.217px">2mg70sIRMS</span></div>
</div>
<div class="t" style="left:686.00px;top:303.00px;font-size:14.00px;line-height:20px;height:20px;color:#f4f4f4;"><span style="letter-spacing:-0.244px">0.378</span></div>
<div class="t" style="left:754.00px;top:303.00px;font-size:14.00px;line-height:20px;height:20px;color:#f4f4f4;"><span style="letter-spacing:-0.105px">19</span></div>
<div class="t" style="left:894.00px;top:303.00px;font-size:14.00px;line-height:20px;height:20px;color:#f4f4f4;word-spacing:-0.094px;"><span style="letter-spacing:-1.366px">EA</span> <span style="letter-spacing:-0.395px">Analysis</span> <span style="letter-spacing:-1.085px">NCS</span></div>
<svg class="r" style="left:13.3px;top:343.3px;" width="12" height="10" viewBox="0 0 12 10"><path d="M1.1,4.3 L4.2,7.5 L10.3,1.1" fill="none" stroke="#fff" stroke-width="2.3"/></svg>
<div class="t" style="left:51.00px;top:333.00px;font-size:14.00px;line-height:20px;height:20px;color:#f4f4f4;word-spacing:0.014px;"><span style="letter-spacing:0.249px">19/05/2017</span> <span style="letter-spacing:-0.836px">NCS</span> <span style="letter-spacing:-0.208px">usgs41</span> <span style="letter-spacing:-0.105px">01</span></div>
<div class="r" style="left:452px;top:333px;width:84px;height:30px;overflow:hidden;">
<div class="t" style="left:0.00px;top:0.00px;font-size:14.00px;line-height:20px;height:20px;color:#f4f4f4;"><span style="letter-spacing:-0.217px">2mg70sIRMS</span></div>
</div>
<div class="t" style="left:686.00px;top:333.00px;font-size:14.00px;line-height:20px;height:20px;color:#f4f4f4;"><span style="letter-spacing:-0.244px">0.404</span></div>
<div class="t" style="left:754.00px;top:333.00px;font-size:14.00px;line-height:20px;height:20px;color:#f4f4f4;"><span style="letter-spacing:-0.105px">20</span></div>
<div class="t" style="left:894.00px;top:333.00px;font-size:14.00px;line-height:20px;height:20px;color:#f4f4f4;word-spacing:-0.094px;"><span style="letter-spacing:-1.366px">EA</span> <span style="letter-spacing:-0.395px">Analysis</span> <span style="letter-spacing:-1.085px">NCS</span></div>
<svg class="r" style="left:13.3px;top:373.3px;" width="12" height="10" viewBox="0 0 12 10"><path d="M1.1,4.3 L4.2,7.5 L10.3,1.1" fill="none" stroke="#fff" stroke-width="2.3"/></svg>
<div class="t" style="left:51.00px;top:363.00px;font-size:14.00px;line-height:20px;height:20px;color:#f4f4f4;word-spacing:0.014px;"><span style="letter-spacing:0.249px">19/05/2017</span> <span style="letter-spacing:-0.836px">NCS</span> <span style="letter-spacing:-0.208px">usgs41</span> <span style="letter-spacing:-0.105px">02</span></div>
<div class="r" style="left:452px;top:363px;width:84px;height:30px;overflow:hidden;">
<div class="t" style="left:0.00px;top:0.00px;font-size:14.00px;line-height:20px;height:20px;color:#f4f4f4;"><span style="letter-spacing:-0.217px">2mg70sIRMS</span></div>
</div>
<div class="t" style="left:686.00px;top:363.00px;font-size:14.00px;line-height:20px;height:20px;color:#f4f4f4;"><span style="letter-spacing:-0.244px">0.388</span></div>
<div class="t" style="left:754.00px;top:363.00px;font-size:14.00px;line-height:20px;height:20px;color:#f4f4f4;"><span style="letter-spacing:-0.105px">21</span></div>
<div class="t" style="left:894.00px;top:363.00px;font-size:14.00px;line-height:20px;height:20px;color:#f4f4f4;word-spacing:-0.094px;"><span style="letter-spacing:-1.366px">EA</span> <span style="letter-spacing:-0.395px">Analysis</span> <span style="letter-spacing:-1.085px">NCS</span></div>
<svg class="r" style="left:13.3px;top:403.3px;" width="12" height="10" viewBox="0 0 12 10"><path d="M1.1,4.3 L4.2,7.5 L10.3,1.1" fill="none" stroke="#fff" stroke-width="2.3"/></svg>
<div class="t" style="left:51.00px;top:393.00px;font-size:14.00px;line-height:20px;height:20px;color:#f4f4f4;word-spacing:0.014px;"><span style="letter-spacing:0.249px">19/05/2017</span> <span style="letter-spacing:-0.836px">NCS</span> <span style="letter-spacing:-0.208px">usgs41</span> <span style="letter-spacing:-0.105px">03</span></div>
<div class="r" style="left:452px;top:393px;width:84px;height:30px;overflow:hidden;">
<div class="t" style="left:0.00px;top:0.00px;font-size:14.00px;line-height:20px;height:20px;color:#f4f4f4;"><span style="letter-spacing:-0.217px">2mg70sIRMS</span></div>
</div>
<div class="t" style="left:686.00px;top:393.00px;font-size:14.00px;line-height:20px;height:20px;color:#f4f4f4;"><span style="letter-spacing:-0.244px">0.428</span></div>
<div class="t" style="left:754.00px;top:393.00px;font-size:14.00px;line-height:20px;height:20px;color:#f4f4f4;"><span style="letter-spacing:-0.105px">22</span></div>
<div class="t" style="left:894.00px;top:393.00px;font-size:14.00px;line-height:20px;height:20px;color:#f4f4f4;word-spacing:-0.094px;"><span style="letter-spacing:-1.366px">EA</span> <span style="letter-spacing:-0.395px">Analysis</span> <span style="letter-spacing:-1.085px">NCS</span></div>
<svg class="r" style="left:13.3px;top:433.3px;" width="12" height="10" viewBox="0 0 12 10"><path d="M1.1,4.3 L4.2,7.5 L10.3,1.1" fill="none" stroke="#fff" stroke-width="2.3"/></svg>
<div class="t" style="left:51.00px;top:423.00px;font-size:14.00px;line-height:20px;height:20px;color:#f4f4f4;word-spacing:0.014px;"><span style="letter-spacing:0.249px">19/05/2017</span> <span style="letter-spacing:-0.836px">NCS</span> <span style="letter-spacing:-0.208px">usgs41</span> <span style="letter-spacing:-0.105px">04</span></div>
<div class="r" style="left:452px;top:423px;width:84px;height:30px;overflow:hidden;">
<div class="t" style="left:0.00px;top:0.00px;font-size:14.00px;line-height:20px;height:20px;color:#f4f4f4;"><span style="letter-spacing:-0.217px">2mg70sIRMS</span></div>
</div>
<div class="t" style="left:686.00px;top:423.00px;font-size:14.00px;line-height:20px;height:20px;color:#f4f4f4;"><span style="letter-spacing:-0.244px">0.391</span></div>
<div class="t" style="left:754.00px;top:423.00px;font-size:14.00px;line-height:20px;height:20px;color:#f4f4f4;"><span style="letter-spacing:-0.105px">23</span></div>
<div class="t" style="left:894.00px;top:423.00px;font-size:14.00px;line-height:20px;height:20px;color:#f4f4f4;word-spacing:-0.094px;"><span style="letter-spacing:-1.366px">EA</span> <span style="letter-spacing:-0.395px">Analysis</span> <span style="letter-spacing:-1.085px">NCS</span></div>
<svg class="r" style="left:13.3px;top:463.3px;" width="12" height="10" viewBox="0 0 12 10"><path d="M1.1,4.3 L4.2,7.5 L10.3,1.1" fill="none" stroke="#fff" stroke-width="2.3"/></svg>
<div class="t" style="left:51.00px;top:453.00px;font-size:14.00px;line-height:20px;height:20px;color:#f4f4f4;word-spacing:0.014px;"><span style="letter-spacing:0.249px">19/05/2017</span> <span style="letter-spacing:-0.836px">NCS</span> <span style="letter-spacing:-0.529px">s1</span> <span style="letter-spacing:-0.105px">01</span></div>
<div class="r" style="left:452px;top:453px;width:84px;height:30px;overflow:hidden;">
<div class="t" style="left:0.00px;top:0.00px;font-size:14.00px;line-height:20px;height:20px;color:#f4f4f4;"><span style="letter-spacing:-0.217px">2mg70sIRMS</span></div>
</div>
<div class="t" style="left:686.00px;top:453.00px;font-size:14.00px;line-height:20px;height:20px;color:#f4f4f4;"><span style="letter-spacing:-0.244px">0.303</span></div>
<div class="t" style="left:754.00px;top:453.00px;font-size:14.00px;line-height:20px;height:20px;color:#f4f4f4;"><span style="letter-spacing:-0.105px">24</span></div>
<div class="t" style="left:894.00px;top:453.00px;font-size:14.00px;line-height:20px;height:20px;color:#f4f4f4;word-spacing:-0.094px;"><span style="letter-spacing:-1.366px">EA</span> <span style="letter-spacing:-0.395px">Analysis</span> <span style="letter-spacing:-1.085px">NCS</span></div>
<svg class="r" style="left:13.3px;top:493.3px;" width="12" height="10" viewBox="0 0 12 10"><path d="M1.1,4.3 L4.2,7.5 L10.3,1.1" fill="none" stroke="#fff" stroke-width="2.3"/></svg>
<div class="t" style="left:51.00px;top:483.00px;font-size:14.00px;line-height:20px;height:20px;color:#f4f4f4;word-spacing:0.014px;"><span style="letter-spacing:0.249px">19/05/2017</span> <span style="letter-spacing:-0.836px">NCS</span> <span style="letter-spacing:-0.529px">s1</span> <span style="letter-spacing:-0.105px">02</span></div>
<div class="r" style="left:452px;top:483px;width:84px;height:30px;overflow:hidden;">
<div class="t" style="left:0.00px;top:0.00px;font-size:14.00px;line-height:20px;height:20px;color:#f4f4f4;"><span style="letter-spacing:-0.217px">2mg70sIRMS</span></div>
</div>
<div class="t" style="left:686.00px;top:483.00px;font-size:14.00px;line-height:20px;height:20px;color:#f4f4f4;"><span style="letter-spacing:-0.244px">0.324</span></div>
<div class="t" style="left:754.00px;top:483.00px;font-size:14.00px;line-height:20px;height:20px;color:#f4f4f4;"><span style="letter-spacing:-0.105px">25</span></div>
<div class="t" style="left:894.00px;top:483.00px;font-size:14.00px;line-height:20px;height:20px;color:#f4f4f4;word-spacing:-0.094px;"><span style="letter-spacing:-1.366px">EA</span> <span style="letter-spacing:-0.395px">Analysis</span> <span style="letter-spacing:-1.085px">NCS</span></div>
<svg class="r" style="left:13.3px;top:523.3px;" width="12" height="10" viewBox="0 0 12 10"><path d="M1.1,4.3 L4.2,7.5 L10.3,1.1" fill="none" stroke="#fff" stroke-width="2.3"/></svg>
<div class="t" style="left:51.00px;top:513.00px;font-size:14.00px;line-height:20px;height:20px;color:#f4f4f4;word-spacing:0.014px;"><span style="letter-spacing:0.249px">19/05/2017</span> <span style="letter-spacing:-0.836px">NCS</span> <span style="letter-spacing:-0.529px">s1</span> <span style="letter-spacing:-0.105px">03</span></div>
<div class="r" style="left:452px;top:513px;width:84px;height:30px;overflow:hidden;">
<div class="t" style="left:0.00px;top:0.00px;font-size:14.00px;line-height:20px;height:20px;color:#f4f4f4;"><span style="letter-spacing:-0.217px">2mg70sIRMS</span></div>
</div>
<div class="t" style="left:686.00px;top:513.00px;font-size:14.00px;line-height:20px;height:20px;color:#f4f4f4;"><span style="letter-spacing:-0.244px">0.329</span></div>
<div class="t" style="left:754.00px;top:513.00px;font-size:14.00px;line-height:20px;height:20px;color:#f4f4f4;"><span style="letter-spacing:-0.105px">26</span></div>
<div class="t" style="left:894.00px;top:513.00px;font-size:14.00px;line-height:20px;height:20px;color:#f4f4f4;word-spacing:-0.094px;"><span style="letter-spacing:-1.366px">EA</span> <span style="letter-spacing:-0.395px">Analysis</span> <span style="letter-spacing:-1.085px">NCS</span></div>
<svg class="r" style="left:13.3px;top:553.3px;" width="12" height="10" viewBox="0 0 12 10"><path d="M1.1,4.3 L4.2,7.5 L10.3,1.1" fill="none" stroke="#fff" stroke-width="2.3"/></svg>
<div class="t" style="left:51.00px;top:543.00px;font-size:14.00px;line-height:20px;height:20px;color:#f4f4f4;word-spacing:0.014px;"><span style="letter-spacing:0.249px">19/05/2017</span> <span style="letter-spacing:-0.836px">NCS</span> <span style="letter-spacing:-0.529px">s1</span> <span style="letter-spacing:-0.105px">04</span></div>
<div class="r" style="left:452px;top:543px;width:84px;height:30px;overflow:hidden;">
<div class="t" style="left:0.00px;top:0.00px;font-size:14.00px;line-height:20px;height:20px;color:#f4f4f4;"><span style="letter-spacing:-0.217px">2mg70sIRMS</span></div>
</div>
<div class="t" style="left:686.00px;top:543.00px;font-size:14.00px;line-height:20px;height:20px;color:#f4f4f4;"><span style="letter-spacing:-0.244px">0.334</span></div>
<div class="t" style="left:754.00px;top:543.00px;font-size:14.00px;line-height:20px;height:20px;color:#f4f4f4;"><span style="letter-spacing:-0.105px">27</span></div>
<div class="t" style="left:894.00px;top:543.00px;font-size:14.00px;line-height:20px;height:20px;color:#f4f4f4;word-spacing:-0.094px;"><span style="letter-spacing:-1.366px">EA</span> <span style="letter-spacing:-0.395px">Analysis</span> <span style="letter-spacing:-1.085px">NCS</span></div>
<svg class="r" style="left:13.3px;top:583.3px;" width="12" height="10" viewBox="0 0 12 10"><path d="M1.1,4.3 L4.2,7.5 L10.3,1.1" fill="none" stroke="#fff" stroke-width="2.3"/></svg>
<div class="t" style="left:51.00px;top:573.00px;font-size:14.00px;line-height:20px;height:20px;color:#f4f4f4;word-spacing:0.014px;"><span style="letter-spacing:0.249px">19/05/2017</span> <span style="letter-spacing:-0.836px">NCS</span> <span style="letter-spacing:-0.529px">s2</span> <span style="letter-spacing:-0.105px">01</span></div>
<div class="r" style="left:452px;top:573px;width:84px;height:30px;overflow:hidden;">
<div class="t" style="left:0.00px;top:0.00px;font-size:14.00px;line-height:20px;height:20px;color:#f4f4f4;"><span style="letter-spacing:-0.217px">2mg70sIRMS</span></div>
</div>
<div class="t" style="left:686.00px;top:573.00px;font-size:14.00px;line-height:20px;height:20px;color:#f4f4f4;"><span style="letter-spacing:-0.337px">0.3</span></div>
<div class="t" style="left:754.00px;top:573.00px;font-size:14.00px;line-height:20px;height:20px;color:#f4f4f4;"><span style="letter-spacing:-0.105px">28</span></div>
<div class="t" style="left:894.00px;top:573.00px;font-size:14.00px;line-height:20px;height:20px;color:#f4f4f4;word-spacing:-0.094px;"><span style="letter-spacing:-1.366px">EA</span> <span style="letter-spacing:-0.395px">Analysis</span> <span style="letter-spacing:-1.085px">NCS</span></div>
<svg class="r" style="left:13.3px;top:613.3px;" width="12" height="10" viewBox="0 0 12 10"><path d="M1.1,4.3 L4.2,7.5 L10.3,1.1" fill="none" stroke="#fff" stroke-width="2.3"/></svg>
<div class="t" style="left:51.00px;top:603.00px;font-size:14.00px;line-height:20px;height:20px;color:#f4f4f4;word-spacing:0.014px;"><span style="letter-spacing:0.249px">19/05/2017</span> <span style="letter-spacing:-0.836px">NCS</span> <span style="letter-spacing:-0.529px">s2</span> <span style="letter-spacing:-0.105px">02</span></div>
<div class="r" style="left:452px;top:603px;width:84px;height:30px;overflow:hidden;">
<div class="t" style="left:0.00px;top:0.00px;font-size:14.00px;line-height:20px;height:20px;color:#f4f4f4;"><span style="letter-spacing:-0.217px">2mg70sIRMS</span></div>
</div>
<div class="t" style="left:686.00px;top:603.00px;font-size:14.00px;line-height:20px;height:20px;color:#f4f4f4;"><span style="letter-spacing:-0.244px">0.324</span></div>
<div class="t" style="left:754.00px;top:603.00px;font-size:14.00px;line-height:20px;height:20px;color:#f4f4f4;"><span style="letter-spacing:-0.105px">29</span></div>
<div class="t" style="left:894.00px;top:603.00px;font-size:14.00px;line-height:20px;height:20px;color:#f4f4f4;word-spacing:-0.094px;"><span style="letter-spacing:-1.366px">EA</span> <span style="letter-spacing:-0.395px">Analysis</span> <span style="letter-spacing:-1.085px">NCS</span></div>
<svg class="r" style="left:13.3px;top:643.3px;" width="12" height="10" viewBox="0 0 12 10"><path d="M1.1,4.3 L4.2,7.5 L10.3,1.1" fill="none" stroke="#fff" stroke-width="2.3"/></svg>
<div class="t" style="left:51.00px;top:633.00px;font-size:14.00px;line-height:20px;height:20px;color:#f4f4f4;word-spacing:0.014px;"><span style="letter-spacing:0.249px">19/05/2017</span> <span style="letter-spacing:-0.836px">NCS</span> <span style="letter-spacing:-0.529px">s2</span> <span style="letter-spacing:-0.105px">03</span></div>
<div class="r" style="left:452px;top:633px;width:84px;height:30px;overflow:hidden;">
<div class="t" style="left:0.00px;top:0.00px;font-size:14.00px;line-height:20px;height:20px;color:#f4f4f4;"><span style="letter-spacing:-0.217px">2mg70sIRMS</span></div>
</div>
<div class="t" style="left:686.00px;top:633.00px;font-size:14.00px;line-height:20px;height:20px;color:#f4f4f4;"><span style="letter-spacing:-0.244px">0.297</span></div>
<div class="t" style="left:754.00px;top:633.00px;font-size:14.00px;line-height:20px;height:20px;color:#f4f4f4;"><span style="letter-spacing:-0.105px">30</span></div>
<div class="t" style="left:894.00px;top:633.00px;font-size:14.00px;line-height:20px;height:20px;color:#f4f4f4;word-spacing:-0.094px;"><span style="letter-spacing:-1.366px">EA</span> <span style="letter-spacing:-0.395px">Analysis</span> <span style="letter-spacing:-1.085px">NCS</span></div>
<svg class="r" style="left:13.3px;top:673.3px;" width="12" height="10" viewBox="0 0 12 10"><path d="M1.1,4.3 L4.2,7.5 L10.3,1.1" fill="none" stroke="#fff" stroke-width="2.3"/></svg>
<div class="t" style="left:51.00px;top:663.00px;font-size:14.00px;line-height:20px;height:20px;color:#f4f4f4;word-spacing:0.014px;"><span style="letter-spacing:0.249px">19/05/2017</span> <span style="letter-spacing:-0.836px">NCS</span> <span style="letter-spacing:-0.529px">s2</span> <span style="letter-spacing:-0.105px">04</span></div>
<div class="r" style="left:452px;top:663px;width:84px;height:30px;overflow:hidden;">
<div class="t" style="left:0.00px;top:0.00px;font-size:14.00px;line-height:20px;height:20px;color:#f4f4f4;"><span style="letter-spacing:-0.217px">2mg70sIRMS</span></div>
</div>
<div class="t" style="left:686.00px;top:663.00px;font-size:14.00px;line-height:20px;height:20px;color:#f4f4f4;"><span style="letter-spacing:-0.244px">0.312</span></div>
<div class="t" style="left:754.00px;top:663.00px;font-size:14.00px;line-height:20px;height:20px;color:#f4f4f4;"><span style="letter-spacing:-0.105px">31</span></div>
<div class="t" style="left:894.00px;top:663.00px;font-size:14.00px;line-height:20px;height:20px;color:#f4f4f4;word-spacing:-0.094px;"><span style="letter-spacing:-1.366px">EA</span> <span style="letter-spacing:-0.395px">Analysis</span> <span style="letter-spacing:-1.085px">NCS</span></div>
<div class="r" style="left:0;top:693px;width:1021px;height:313px;overflow:hidden;">
<div class="r" style="left:310px;top:0px;width:227px;height:30px;background:#dcdcdc;"></div>
<div class="r" style="left:684px;top:0px;width:208px;height:30px;background:#dcdcdc;"></div>
<div class="r" style="left:998px;top:0px;width:6px;height:30px;background:#dcdcdc;"></div>
<svg class="r" style="left:13.3px;top:10.3px;" width="12" height="10" viewBox="0 0 12 10"><path d="M1.1,4.3 L4.2,7.5 L10.3,1.1" fill="none" stroke="#0f840f" stroke-width="2.3"/></svg>
<div class="r" style="left:894px;top:0px;width:103px;height:30px;overflow:hidden;">
<div class="t" style="left:0.00px;top:0.00px;font-size:14.00px;line-height:20px;height:20px;color:#1b8a1b;word-spacing:-0.095px;"><span style="letter-spacing:-1.367px">EA</span> <span style="letter-spacing:-0.492px">Sleep</span></div>
</div>
<div class="r" style="left:310px;top:30px;width:227px;height:30px;background:#dcdcdc;"></div>
<div class="r" style="left:684px;top:30px;width:208px;height:30px;background:#dcdcdc;"></div>
<svg class="r" style="left:13.3px;top:40.3px;" width="12" height="10" viewBox="0 0 12 10"><path d="M1.1,4.3 L4.2,7.5 L10.3,1.1" fill="none" stroke="#0f840f" stroke-width="2.3"/></svg>
<div class="r" style="left:894px;top:30px;width:103px;height:30px;overflow:hidden;">
<div class="t" style="left:0.00px;top:0.00px;font-size:14.00px;line-height:20px;height:20px;color:#1b8a1b;"><span style="letter-spacing:0.129px">Autotune</span></div>
</div>
<div class="r" style="left:998px;top:60px;width:6px;height:30px;background:#dcdcdc;"></div>
<svg class="r" style="left:13.3px;top:70.3px;" width="12" height="10" viewBox="0 0 12 10"><path d="M1.1,4.3 L4.2,7.5 L10.3,1.1" fill="none" stroke="#0f840f" stroke-width="2.3"/></svg>
<div class="r" style="left:452px;top:60px;width:84px;height:30px;overflow:hidden;">
<div class="t" style="left:0.00px;top:0.00px;font-size:14.00px;line-height:20px;height:20px;color:#1b8a1b;"><span style="letter-spacing:-0.217px">2mg70sIRMS</span></div>
</div>
<div class="t" style="left:686.00px;top:60.00px;font-size:14.00px;line-height:20px;height:20px;color:#1b8a1b;"><span style="letter-spacing:-0.337px">0.3</span></div>
<div class="t" style="left:754.00px;top:60.00px;font-size:14.00px;line-height:20px;height:20px;color:#1b8a1b;"><span style="letter-spacing:-0.105px">32</span></div>
<div class="r" style="left:894px;top:60px;width:103px;height:30px;overflow:hidden;">
<div class="t" style="left:0.00px;top:0.00px;font-size:14.00px;line-height:20px;height:20px;color:#1b8a1b;word-spacing:-0.094px;"><span style="letter-spacing:-1.366px">EA</span> <span style="letter-spacing:-0.395px">Analysis</span> <span style="letter-spacing:-1.085px">NCS</span></div>
</div>
<div class="r" style="left:998px;top:90px;width:6px;height:30px;background:#dcdcdc;"></div>
<svg class="r" style="left:13.3px;top:100.3px;" width="12" height="10" viewBox="0 0 12 10"><path d="M1.1,4.3 L4.2,7.5 L10.3,1.1" fill="none" stroke="#0f840f" stroke-width="2.3"/></svg>
<div class="r" style="left:452px;top:90px;width:84px;height:30px;overflow:hidden;">
<div class="t" style="left:0.00px;top:0.00px;font-size:14.00px;line-height:20px;height:20px;color:#1b8a1b;"><span style="letter-spacing:-0.217px">2mg70sIRMS</span></div>
</div>
<div class="t" style="left:686.00px;top:90.00px;font-size:14.00px;line-height:20px;height:20px;color:#1b8a1b;"><span style="letter-spacing:-0.337px">0.3</span></div>
<div class="t" style="left:754.00px;top:90.00px;font-size:14.00px;line-height:20px;height:20px;color:#1b8a1b;"><span style="letter-spacing:-0.105px">33</span></div>
<div class="r" style="left:894px;top:90px;width:103px;height:30px;overflow:hidden;">
<div class="t" style="left:0.00px;top:0.00px;font-size:14.00px;line-height:20px;height:20px;color:#1b8a1b;word-spacing:-0.094px;"><span style="letter-spacing:-1.366px">EA</span> <span style="letter-spacing:-0.395px">Analysis</span> <span style="letter-spacing:-1.085px">NCS</span></div>
</div>
<div class="r" style="left:310px;top:120px;width:227px;height:30px;background:#dcdcdc;"></div>
<div class="r" style="left:684px;top:120px;width:208px;height:30px;background:#dcdcdc;"></div>
<svg class="r" style="left:13.3px;top:130.3px;" width="12" height="10" viewBox="0 0 12 10"><path d="M1.1,4.3 L4.2,7.5 L10.3,1.1" fill="none" stroke="#0f840f" stroke-width="2.3"/></svg>
<div class="t" style="left:50.00px;top:120.00px;font-size:14.00px;line-height:20px;height:20px;color:#1b8a1b;word-spacing:0.014px;"><span style="letter-spacing:0.249px">23/05/2017</span> <span style="letter-spacing:-0.116px">set</span> <span style="letter-spacing:-0.295px">species</span> <span style="letter-spacing:-0.049px">H2</span></div>
<div class="r" style="left:894px;top:120px;width:103px;height:30px;overflow:hidden;">
<div class="t" style="left:0.00px;top:0.00px;font-size:14.00px;line-height:20px;height:20px;color:#1b8a1b;word-spacing:-0.097px;"><span style="letter-spacing:-0.575px">Set</span> <span style="letter-spacing:-0.601px">Species</span></div>
</div>
<div class="r" style="left:998px;top:120px;width:6px;height:30px;overflow:hidden;">
<div class="t" style="left:2.00px;top:0.00px;font-size:14.00px;line-height:20px;height:20px;color:#1b8a1b;"><span style="letter-spacing:0.006px">H</span></div>
</div>
<div class="r" style="left:310px;top:150px;width:227px;height:30px;background:#dcdcdc;"></div>
<div class="r" style="left:684px;top:150px;width:208px;height:30px;background:#dcdcdc;"></div>
<svg class="r" style="left:13.3px;top:160.3px;" width="12" height="10" viewBox="0 0 12 10"><path d="M1.1,4.3 L4.2,7.5 L10.3,1.1" fill="none" stroke="#0f840f" stroke-width="2.3"/></svg>
<div class="t" style="left:50.00px;top:150.00px;font-size:14.00px;line-height:20px;height:20px;color:#1b8a1b;word-spacing:0.014px;"><span style="letter-spacing:0.249px">23/05/2017</span> <span style="letter-spacing:0.301px">autotune</span> <span style="letter-spacing:-0.049px">H2</span></div>
<div class="r" style="left:894px;top:150px;width:103px;height:30px;overflow:hidden;">
<div class="t" style="left:0.00px;top:0.00px;font-size:14.00px;line-height:20px;height:20px;color:#1b8a1b;"><span style="letter-spacing:0.129px">Autotune</span></div>
</div>
<div class="r" style="left:998px;top:150px;width:6px;height:30px;overflow:hidden;">
<div class="t" style="left:2.00px;top:0.00px;font-size:14.00px;line-height:20px;height:20px;color:#1b8a1b;"><span style="letter-spacing:0.006px">H</span></div>
</div>
<div class="r" style="left:310px;top:180px;width:227px;height:30px;background:#dcdcdc;"></div>
<div class="r" style="left:684px;top:180px;width:208px;height:30px;background:#dcdcdc;"></div>
<svg class="r" style="left:13.3px;top:190.3px;" width="12" height="10" viewBox="0 0 12 10"><path d="M1.1,4.3 L4.2,7.5 L10.3,1.1" fill="none" stroke="#0f840f" stroke-width="2.3"/></svg>
<div class="t" style="left:50.00px;top:180.00px;font-size:14.00px;line-height:20px;height:20px;color:#1b8a1b;word-spacing:0.014px;"><span style="letter-spacing:0.249px">23/05/2017</span> <span style="letter-spacing:0.208px">stability</span> <span style="letter-spacing:-0.049px">H2</span></div>
<div class="r" style="left:894px;top:180px;width:103px;height:30px;overflow:hidden;">
<div class="t" style="left:0.00px;top:0.00px;font-size:14.00px;line-height:20px;height:20px;color:#1b8a1b;"><span style="letter-spacing:-0.050px">Stability</span></div>
</div>
<div class="r" style="left:998px;top:180px;width:6px;height:30px;overflow:hidden;">
<div class="t" style="left:2.00px;top:0.00px;font-size:14.00px;line-height:20px;height:20px;color:#1b8a1b;"><span style="letter-spacing:0.006px">H</span></div>
</div>
<div class="r" style="left:310px;top:210px;width:227px;height:30px;background:#dcdcdc;"></div>
<div class="r" style="left:684px;top:210px;width:208px;height:30px;background:#dcdcdc;"></div>
<div class="r" style="left:998px;top:210px;width:6px;height:30px;background:#dcdcdc;"></div>
<svg class="r" style="left:13.3px;top:220.3px;" width="12" height="10" viewBox="0 0 12 10"><path d="M1.1,4.3 L4.2,7.5 L10.3,1.1" fill="none" stroke="#0f840f" stroke-width="2.3"/></svg>
<div class="t" style="left:50.00px;top:210.00px;font-size:14.00px;line-height:20px;height:20px;color:#1b8a1b;word-spacing:0.014px;"><span style="letter-spacing:0.249px">23/05/2017</span> <span style="letter-spacing:0.208px">stability</span> <span style="letter-spacing:-0.049px">H3</span></div>
<div class="r" style="left:894px;top:210px;width:103px;height:30px;overflow:hidden;">
<div class="t" style="left:0.00px;top:0.00px;font-size:14.00px;line-height:20px;height:20px;color:#1b8a1b;word-spacing:-0.098px;"><span style="letter-spacing:-0.304px">H3</span> <span style="letter-spacing:-0.065px">Correction</span></div>
</div>
<div class="r" style="left:310px;top:240px;width:227px;height:30px;background:#dcdcdc;"></div>
<div class="r" style="left:684px;top:240px;width:208px;height:30px;background:#dcdcdc;"></div>
<div class="r" style="left:998px;top:240px;width:6px;height:30px;background:#dcdcdc;"></div>
<svg class="r" style="left:13.3px;top:250.3px;" width="12" height="10" viewBox="0 0 12 10"><path d="M1.1,4.3 L4.2,7.5 L10.3,1.1" fill="none" stroke="#0f840f" stroke-width="2.3"/></svg>
<div class="t" style="left:50.00px;top:240.00px;font-size:14.00px;line-height:20px;height:20px;color:#1b8a1b;word-spacing:0.014px;"><span style="letter-spacing:0.249px">23/05/2017</span> <span style="letter-spacing:0.208px">stability</span> <span style="letter-spacing:-0.049px">H3</span></div>
<div class="r" style="left:894px;top:240px;width:103px;height:30px;overflow:hidden;">
<div class="t" style="left:0.00px;top:0.00px;font-size:14.00px;line-height:20px;height:20px;color:#1b8a1b;word-spacing:-0.098px;"><span style="letter-spacing:-0.304px">H3</span> <span style="letter-spacing:-0.065px">Correction</span></div>
</div>
<div class="r" style="left:310px;top:270px;width:227px;height:30px;background:#dcdcdc;"></div>
<div class="r" style="left:684px;top:270px;width:208px;height:30px;background:#dcdcdc;"></div>
<svg class="r" style="left:13.3px;top:280.3px;" width="12" height="10" viewBox="0 0 12 10"><path d="M1.1,4.3 L4.2,7.5 L10.3,1.1" fill="none" stroke="#0f840f" stroke-width="2.3"/></svg>
<div class="t" style="left:50.00px;top:270.00px;font-size:14.00px;line-height:20px;height:20px;color:#1b8a1b;word-spacing:0.014px;"><span style="letter-spacing:0.249px">23/05/2017</span> <span style="letter-spacing:0.301px">autotune</span> <span style="letter-spacing:-0.049px">H2</span></div>
<div class="r" style="left:894px;top:270px;width:103px;height:30px;overflow:hidden;">
<div class="t" style="left:0.00px;top:0.00px;font-size:14.00px;line-height:20px;height:20px;color:#1b8a1b;"><span style="letter-spacing:0.129px">Autotune</span></div>
</div>
<div class="r" style="left:998px;top:270px;width:6px;height:30px;overflow:hidden;">
<div class="t" style="left:2.00px;top:0.00px;font-size:14.00px;line-height:20px;height:20px;color:#1b8a1b;"><span style="letter-spacing:0.006px">H</span></div>
</div>
<div class="r" style="left:998px;top:300px;width:6px;height:30px;background:#dcdcdc;"></div>
<svg class="r" style="left:13.3px;top:310.3px;" width="12" height="10" viewBox="0 0 12 10"><path d="M1.1,4.3 L4.2,7.5 L10.3,1.1" fill="none" stroke="#0f840f" stroke-width="2.3"/></svg>
<div class="t" style="left:50.00px;top:300.00px;font-size:14.00px;line-height:20px;height:20px;color:#1b8a1b;"><span style="letter-spacing:-0.054px">blank</span></div>
<div class="r" style="left:452px;top:300px;width:84px;height:30px;overflow:hidden;">
<div class="t" style="left:0.00px;top:0.00px;font-size:14.00px;line-height:20px;height:20px;color:#1b8a1b;"><span style="letter-spacing:-0.213px">H-CO-HT-Pyr</span></div>
</div>
<div class="t" style="left:686.00px;top:300.00px;font-size:14.00px;line-height:20px;height:20px;color:#1b8a1b;"><span style="letter-spacing:-0.105px">1</span></div>
<div class="t" style="left:754.00px;top:300.00px;font-size:14.00px;line-height:20px;height:20px;color:#1b8a1b;"><span style="letter-spacing:-0.105px">1</span></div>
<div class="r" style="left:894px;top:300px;width:103px;height:30px;overflow:hidden;">
<div class="t" style="left:0.00px;top:0.00px;font-size:14.00px;line-height:20px;height:20px;color:#1b8a1b;word-spacing:-0.083px;"><span style="letter-spacing:-1.342px">EA</span> <span style="letter-spacing:-0.377px">Analysis</span> <span style="letter-spacing:-0.271px">H2</span> <span style="letter-spacing:0.894px">-</span></div>
</div>
</div>
<div class="r" style="left:1004px;top:190px;width:17px;height:816px;background:#f0f0f0;"></div>
<div class="r" style="left:1004px;top:456px;width:17px;height:187px;background:#cdcdcd;"></div>
<svg class="r" style="left:1010px;top:196px;" width="7" height="5" viewBox="0 0 7 5"><path d="M0.3,4.4 L3.5,1 L6.7,4.4" fill="none" stroke="#a0a0a0" stroke-width="1.3"/></svg>
<svg class="r" style="left:1010px;top:995px;" width="7" height="5" viewBox="0 0 7 5"><path d="M0.3,0.6 L3.5,4 L6.7,0.6" fill="none" stroke="#707070" stroke-width="1.3"/></svg>
<div class="r" style="left:11px;top:1006px;width:1010px;height:17px;background:#f0f0f0;"></div>
<div class="r" style="left:28px;top:1006px;width:313px;height:17px;background:#cdcdcd;"></div>
<svg class="r" style="left:17px;top:1010.6px;" width="6" height="8" viewBox="0 0 6 8"><path d="M4.6,0.5 L1,3.9 L4.6,7.3" fill="none" stroke="#a8a8a8" stroke-width="1.2"/></svg>
<svg class="r" style="left:993px;top:1010.6px;" width="6" height="8" viewBox="0 0 6 8"><path d="M0.8,0.5 L4.4,3.9 L0.8,7.3" fill="none" stroke="#808080" stroke-width="1.2"/></svg>
<div class="r" style="left:1028px;top:160px;width:4px;height:868px;background:#e9e9e9;"></div>
<div class="t" style="left:1039.00px;top:165.00px;font-size:16.60px;line-height:23px;height:23px;color:#444;word-spacing:0.045px;"><span style="letter-spacing:-0.019px">Data</span> <span style="letter-spacing:0.032px">View</span></div>
<div class="r" style="left:1039px;top:186px;width:870px;height:1px;background:#d4d4d4;"></div>
<svg class="r" style="left:1867px;top:169px;" width="11" height="12" viewBox="0 0 11 12"><path d="M2.5,5 V3.5 C2.5,0 8.5,0 8.5,3.5 V5" fill="none" stroke="#777" stroke-width="1.2"/><rect x="0.8" y="5.2" width="9.4" height="5.6" fill="#fff" stroke="#777" stroke-width="1.3"/></svg>
<svg class="r" style="left:1892px;top:171px;" width="9" height="8" viewBox="0 0 9 8"><path d="M0.6,0.5 L8,7 M8,0.5 L0.6,7" stroke="#666" stroke-width="1.4"/></svg>
<div class="r" style="left:1040px;top:192px;width:286px;height:274px;background:#f3f6fa;border:1px solid #505050;border-left-color:#8c8c8c;border-radius:5px 5px 0 0;"></div>
<div class="t" style="left:1043.00px;top:194.00px;font-size:12.00px;line-height:18px;height:18px;color:#333;word-spacing:-0.047px;"><span style="letter-spacing:0.072px">Acquisition</span> <span style="letter-spacing:-0.161px">(N2)</span></div>
<svg class="r" style="left:1308.6px;top:199.2px;" width="10" height="9" viewBox="0 0 10 9"><rect x="3" y="0.9" width="5.2" height="3.9" fill="#fff" stroke="#6a6f7c" stroke-width="1"/><path d="M2.5,1.2 H8.7" stroke="#6a6f7c" stroke-width="1.6"/><rect x="0.6" y="3.7" width="5.2" height="3.7" fill="#fff" stroke="#6a6f7c" stroke-width="1"/><path d="M0.1,4 H6.3" stroke="#6a6f7c" stroke-width="1.6"/></svg>
<div class="r" style="left:1043px;top:213px;width:279px;height:249px;background:#fff;border:1px solid #93a6c2;"></div>
<div class="r" style="left:1326px;top:192px;width:286px;height:274px;background:#f3f6fa;border:1px solid #505050;border-left-color:#8c8c8c;border-radius:5px 5px 0 0;"></div>
<div class="t" style="left:1329.00px;top:194.00px;font-size:12.00px;line-height:18px;height:18px;color:#333;word-spacing:-0.047px;"><span style="letter-spacing:0.072px">Acquisition</span> <span style="letter-spacing:-0.496px">(CO2)</span></div>
<svg class="r" style="left:1594.6px;top:199.2px;" width="10" height="9" viewBox="0 0 10 9"><rect x="3" y="0.9" width="5.2" height="3.9" fill="#fff" stroke="#6a6f7c" stroke-width="1"/><path d="M2.5,1.2 H8.7" stroke="#6a6f7c" stroke-width="1.6"/><rect x="0.6" y="3.7" width="5.2" height="3.7" fill="#fff" stroke="#6a6f7c" stroke-width="1"/><path d="M0.1,4 H6.3" stroke="#6a6f7c" stroke-width="1.6"/></svg>
<div class="r" style="left:1329px;top:213px;width:279px;height:249px;background:#fff;border:1px solid #93a6c2;"></div>
<div class="r" style="left:1613px;top:192px;width:286px;height:274px;background:#f3f6fa;border:1px solid #505050;border-left-color:#8c8c8c;border-radius:5px 5px 0 0;"></div>
<div class="t" style="left:1616.00px;top:194.00px;font-size:12.00px;line-height:18px;height:18px;color:#333;word-spacing:-0.047px;"><span style="letter-spacing:0.072px">Acquisition</span> <span style="letter-spacing:-0.575px">(SO2)</span></div>
<svg class="r" style="left:1881.6px;top:199.2px;" width="10" height="9" viewBox="0 0 10 9"><rect x="3" y="0.9" width="5.2" height="3.9" fill="#fff" stroke="#6a6f7c" stroke-width="1"/><path d="M2.5,1.2 H8.7" stroke="#6a6f7c" stroke-width="1.6"/><rect x="0.6" y="3.7" width="5.2" height="3.7" fill="#fff" stroke="#6a6f7c" stroke-width="1"/><path d="M0.1,4 H6.3" stroke="#6a6f7c" stroke-width="1.6"/></svg>
<div class="r" style="left:1616px;top:213px;width:279px;height:249px;background:#fff;border:1px solid #93a6c2;"></div>
<div class="t" style="left:1100.00px;top:222.50px;font-size:16.60px;line-height:23px;height:23px;color:#666;"><span style="letter-spacing:0.330px">N2</span></div>
<div class="t" style="left:1082.19px;top:238.00px;font-size:12.00px;line-height:18px;height:18px;color:#8a68da;"><span style="letter-spacing:-0.386px">8E-9</span></div>
<div class="t" style="left:1082.19px;top:261.60px;font-size:12.00px;line-height:18px;height:18px;color:#8a68da;"><span style="letter-spacing:-0.386px">7E-9</span></div>
<div class="t" style="left:1082.19px;top:285.20px;font-size:12.00px;line-height:18px;height:18px;color:#8a68da;"><span style="letter-spacing:-0.386px">6E-9</span></div>
<div class="t" style="left:1082.19px;top:308.80px;font-size:12.00px;line-height:18px;height:18px;color:#8a68da;"><span style="letter-spacing:-0.386px">5E-9</span></div>
<div class="t" style="left:1082.19px;top:332.40px;font-size:12.00px;line-height:18px;height:18px;color:#8a68da;"><span style="letter-spacing:-0.386px">4E-9</span></div>
<div class="t" style="left:1082.19px;top:356.00px;font-size:12.00px;line-height:18px;height:18px;color:#8a68da;"><span style="letter-spacing:-0.386px">3E-9</span></div>
<div class="t" style="left:1082.19px;top:379.60px;font-size:12.00px;line-height:18px;height:18px;color:#8a68da;"><span style="letter-spacing:-0.386px">2E-9</span></div>
<div class="t" style="left:1082.19px;top:403.20px;font-size:12.00px;line-height:18px;height:18px;color:#8a68da;"><span style="letter-spacing:-0.386px">1E-9</span></div>
<div class="t" style="left:1099.53px;top:426.80px;font-size:12.00px;line-height:18px;height:18px;color:#8a68da;"><span style="letter-spacing:-0.205px">0</span></div>
<div class="r" style="left:1102.8px;top:435.3px;width:22px;height:17px;overflow:hidden;">
<div class="t" style="left:-2.21px;top:-1.00px;font-size:12.00px;line-height:18px;height:18px;color:#333;"><span style="letter-spacing:-0.416px">0:00.</span></div>
</div>
<div class="r" style="left:1129.4px;top:435.3px;width:22px;height:17px;overflow:hidden;">
<div class="t" style="left:-2.21px;top:-1.00px;font-size:12.00px;line-height:18px;height:18px;color:#333;"><span style="letter-spacing:-0.416px">3:20.</span></div>
</div>
<div class="r" style="left:1156.0px;top:435.3px;width:22px;height:17px;overflow:hidden;">
<div class="t" style="left:-2.21px;top:-1.00px;font-size:12.00px;line-height:18px;height:18px;color:#333;"><span style="letter-spacing:-0.416px">6:40.</span></div>
</div>
<svg class="r" style="left:1110px;top:245px;" width="50" height="190" viewBox="0 0 50 190">
<path d="M4,182.6 H9.3 L10.6,7 L12.8,182.6 L20,182.8 L24,182 L26.8,182.6 H32 L35,182 L38,183" fill="none" stroke="#b79be8" stroke-width="1"/>
<path d="M4,183 H20 L24,182.5 L27,182.6 L29,73 L31.2,182.6 L34,182.6 L38,183.4" fill="none" stroke="#983838" stroke-width="0.9"/>
<path d="M9.9,183 V14 L11,10.5 L12.7,15 V183 Z" fill="#d9cdf5" stroke="#0a0af0" stroke-width="1.4"/>
<path d="M27.2,182.8 L29,73.5 L31.2,182.8 Z" fill="none" stroke="#f80808" stroke-width="1.5"/>
</svg>
<div class="t" style="left:1114.00px;top:246.00px;font-size:12.00px;line-height:18px;height:18px;color:#1010f0;"><span style="letter-spacing:0.287px">M1</span></div>
<div class="t" style="left:1133.00px;top:303.00px;font-size:12.00px;line-height:18px;height:18px;color:#f01010;"><span style="letter-spacing:-0.917px">S1</span></div>
<div class="r" style="left:1198px;top:228px;width:94px;height:67px;background:linear-gradient(#f2f2f2,#dfdfdf);border:1px solid #c2c2c2;box-shadow:0 1px 6px rgba(0,0,0,0.30);"></div>
<svg class="r" style="left:1206px;top:236.0px;" width="13.5" height="13.5" viewBox="0 0 13.5 13.5"><rect x="0.65" y="0.65" width="12.2" height="12.2" fill="#fff" stroke="#555" stroke-width="1.3"/><path d="M2.6,6.8 L5.6,10 L10.6,2.8" fill="none" stroke="#111" stroke-width="2.1"/></svg>
<div class="r" style="left:1228.6px;top:241.8px;width:16.4px;height:2px;background:#c2adee;"></div>
<div class="t" style="left:1252.56px;top:231.90px;font-size:12.00px;line-height:18px;height:18px;color:#8a68da;"><span style="letter-spacing:-0.205px">28</span></div>
<svg class="r" style="left:1270.5px;top:233.5px;" width="13" height="13" viewBox="0 0 13 13"><circle cx="6.5" cy="6.5" r="5.7" fill="#fff" stroke="#333" stroke-width="1"/><circle cx="6.5" cy="6.5" r="3" fill="#111"/></svg>
<svg class="r" style="left:1206px;top:254.99999999999997px;" width="13.5" height="13.5" viewBox="0 0 13.5 13.5"><rect x="0.65" y="0.65" width="12.2" height="12.2" fill="#fff" stroke="#555" stroke-width="1.3"/><path d="M2.6,6.8 L5.6,10 L10.6,2.8" fill="none" stroke="#111" stroke-width="2.1"/></svg>
<div class="r" style="left:1228.6px;top:260.79999999999995px;width:16.4px;height:2px;background:#a85050;"></div>
<div class="t" style="left:1252.56px;top:250.90px;font-size:12.00px;line-height:18px;height:18px;color:#8b0a12;"><span style="letter-spacing:-0.205px">29</span></div>
<svg class="r" style="left:1270.5px;top:252.49999999999997px;" width="13" height="13" viewBox="0 0 13 13"><circle cx="6.5" cy="6.5" r="5.7" fill="#fff" stroke="#333" stroke-width="1"/></svg>
<svg class="r" style="left:1206px;top:274.0px;" width="13.5" height="13.5" viewBox="0 0 13.5 13.5"><rect x="0.65" y="0.65" width="12.2" height="12.2" fill="#fff" stroke="#555" stroke-width="1.3"/></svg>
<div class="r" style="left:1228.6px;top:279.79999999999995px;width:16.4px;height:2px;background:#5050b0;"></div>
<div class="t" style="left:1252.56px;top:269.90px;font-size:12.00px;line-height:18px;height:18px;color:#0a0a90;"><span style="letter-spacing:-0.205px">30</span></div>
<svg class="r" style="left:1270.5px;top:271.5px;" width="13" height="13" viewBox="0 0 13 13"><circle cx="6.5" cy="6.5" r="5.7" fill="#fff" stroke="#333" stroke-width="1"/></svg>
<div class="t" style="left:1380.00px;top:222.50px;font-size:16.60px;line-height:23px;height:23px;color:#666;"><span style="letter-spacing:-0.542px">CO2</span></div>
<div class="t" style="left:1359.12px;top:238.00px;font-size:12.00px;line-height:18px;height:18px;color:#243f6e;"><span style="letter-spacing:-0.413px">2.5E-8</span></div>
<div class="t" style="left:1368.19px;top:275.80px;font-size:12.00px;line-height:18px;height:18px;color:#243f6e;"><span style="letter-spacing:-0.386px">2E-8</span></div>
<div class="t" style="left:1359.12px;top:313.60px;font-size:12.00px;line-height:18px;height:18px;color:#243f6e;"><span style="letter-spacing:-0.413px">1.5E-8</span></div>
<div class="t" style="left:1368.19px;top:351.40px;font-size:12.00px;line-height:18px;height:18px;color:#243f6e;"><span style="letter-spacing:-0.386px">1E-8</span></div>
<div class="t" style="left:1368.19px;top:389.20px;font-size:12.00px;line-height:18px;height:18px;color:#243f6e;"><span style="letter-spacing:-0.386px">5E-9</span></div>
<div class="t" style="left:1385.53px;top:427.00px;font-size:12.00px;line-height:18px;height:18px;color:#243f6e;"><span style="letter-spacing:-0.205px">0</span></div>
<div class="r" style="left:1396.2px;top:435.3px;width:12.5px;height:17px;overflow:hidden;">
<div class="t" style="left:-7.40px;top:-1.00px;font-size:12.00px;line-height:18px;height:18px;color:#333;"><span style="letter-spacing:-0.416px">0:00.</span></div>
</div>
<div class="r" style="left:1408.9px;top:435.3px;width:12.5px;height:17px;overflow:hidden;">
<div class="t" style="left:-7.40px;top:-1.00px;font-size:12.00px;line-height:18px;height:18px;color:#333;"><span style="letter-spacing:-0.416px">0:50.</span></div>
</div>
<div class="r" style="left:1421.6px;top:435.3px;width:12.5px;height:17px;overflow:hidden;">
<div class="t" style="left:-7.40px;top:-1.00px;font-size:12.00px;line-height:18px;height:18px;color:#333;"><span style="letter-spacing:-0.416px">1:40.</span></div>
</div>
<div class="r" style="left:1434.3px;top:435.3px;width:12.5px;height:17px;overflow:hidden;">
<div class="t" style="left:-7.40px;top:-1.00px;font-size:12.00px;line-height:18px;height:18px;color:#333;"><span style="letter-spacing:-0.416px">2:30.</span></div>
</div>
<div class="r" style="left:1447.0px;top:435.3px;width:12.5px;height:17px;overflow:hidden;">
<div class="t" style="left:-7.40px;top:-1.00px;font-size:12.00px;line-height:18px;height:18px;color:#333;"><span style="letter-spacing:-0.416px">3:20.</span></div>
</div>
<svg class="r" style="left:1400px;top:255px;" width="60" height="185" viewBox="0 0 60 185">
<path d="M5.8,180.4 H30 L32.6,179.5 L33.4,144.4 H40.4 L41,179.5 L43,180.4 H48.7" fill="none" stroke="#4a96a6" stroke-width="1"/>
<path d="M11.7,180.2 L17,11 L20.1,125 L21.5,173 Q22.6,178 26.3,180.2 Z" fill="#fff" stroke="#f80808" stroke-width="1.5" stroke-linejoin="round"/>
<path d="M12.9,178 L17,30" fill="none" stroke="#f80808" stroke-width="1.1"/>
<path d="M35.4,180 V144.6 H40.1 V180 Z" fill="#fff" stroke="#0a0af0" stroke-width="1.6"/>
<path d="M35,144.2 H40.6" stroke="#0a0af0" stroke-width="2.2"/>
</svg>
<div class="t" style="left:1411.00px;top:249.00px;font-size:12.00px;line-height:18px;height:18px;color:#f01010;"><span style="letter-spacing:-0.917px">S1</span></div>
<div class="t" style="left:1429.00px;top:378.00px;font-size:12.00px;line-height:18px;height:18px;color:#1010f0;"><span style="letter-spacing:0.287px">M1</span></div>
<div class="r" style="left:1484px;top:228px;width:94px;height:67px;background:linear-gradient(#f2f2f2,#dfdfdf);border:1px solid #c2c2c2;box-shadow:0 1px 6px rgba(0,0,0,0.30);"></div>
<svg class="r" style="left:1492px;top:236.0px;" width="13.5" height="13.5" viewBox="0 0 13.5 13.5"><rect x="0.65" y="0.65" width="12.2" height="12.2" fill="#fff" stroke="#555" stroke-width="1.3"/><path d="M2.6,6.8 L5.6,10 L10.6,2.8" fill="none" stroke="#111" stroke-width="2.1"/></svg>
<div class="r" style="left:1514.6px;top:241.8px;width:16.4px;height:2px;background:#6a86b5;"></div>
<div class="t" style="left:1538.56px;top:231.90px;font-size:12.00px;line-height:18px;height:18px;color:#243f6e;"><span style="letter-spacing:-0.205px">44</span></div>
<svg class="r" style="left:1556.5px;top:233.5px;" width="13" height="13" viewBox="0 0 13 13"><circle cx="6.5" cy="6.5" r="5.7" fill="#fff" stroke="#333" stroke-width="1"/><circle cx="6.5" cy="6.5" r="3" fill="#111"/></svg>
<svg class="r" style="left:1492px;top:254.99999999999997px;" width="13.5" height="13.5" viewBox="0 0 13.5 13.5"><rect x="0.65" y="0.65" width="12.2" height="12.2" fill="#fff" stroke="#555" stroke-width="1.3"/><path d="M2.6,6.8 L5.6,10 L10.6,2.8" fill="none" stroke="#111" stroke-width="2.1"/></svg>
<div class="r" style="left:1514.6px;top:260.79999999999995px;width:16.4px;height:2px;background:#eba36a;"></div>
<div class="t" style="left:1538.56px;top:250.90px;font-size:12.00px;line-height:18px;height:18px;color:#e06a1a;"><span style="letter-spacing:-0.205px">45</span></div>
<svg class="r" style="left:1556.5px;top:252.49999999999997px;" width="13" height="13" viewBox="0 0 13 13"><circle cx="6.5" cy="6.5" r="5.7" fill="#fff" stroke="#333" stroke-width="1"/></svg>
<svg class="r" style="left:1492px;top:274.0px;" width="13.5" height="13.5" viewBox="0 0 13.5 13.5"><rect x="0.65" y="0.65" width="12.2" height="12.2" fill="#fff" stroke="#555" stroke-width="1.3"/><path d="M2.6,6.8 L5.6,10 L10.6,2.8" fill="none" stroke="#111" stroke-width="2.1"/></svg>
<div class="r" style="left:1514.6px;top:279.79999999999995px;width:16.4px;height:2px;background:#8cc3d4;"></div>
<div class="t" style="left:1538.56px;top:269.90px;font-size:12.00px;line-height:18px;height:18px;color:#3a8cae;"><span style="letter-spacing:-0.205px">46</span></div>
<svg class="r" style="left:1556.5px;top:271.5px;" width="13" height="13" viewBox="0 0 13 13"><circle cx="6.5" cy="6.5" r="5.7" fill="#fff" stroke="#333" stroke-width="1"/></svg>
<div class="t" style="left:1667.00px;top:222.50px;font-size:16.60px;line-height:23px;height:23px;color:#666;"><span style="letter-spacing:-0.735px">SO2</span></div>
<div class="t" style="left:1655.19px;top:238.00px;font-size:12.00px;line-height:18px;height:18px;color:#8fbc8f;"><span style="letter-spacing:-0.386px">6E-9</span></div>
<div class="t" style="left:1655.19px;top:269.50px;font-size:12.00px;line-height:18px;height:18px;color:#8fbc8f;"><span style="letter-spacing:-0.386px">5E-9</span></div>
<div class="t" style="left:1655.19px;top:301.00px;font-size:12.00px;line-height:18px;height:18px;color:#8fbc8f;"><span style="letter-spacing:-0.386px">4E-9</span></div>
<div class="t" style="left:1655.19px;top:332.50px;font-size:12.00px;line-height:18px;height:18px;color:#8fbc8f;"><span style="letter-spacing:-0.386px">3E-9</span></div>
<div class="t" style="left:1655.19px;top:364.00px;font-size:12.00px;line-height:18px;height:18px;color:#8fbc8f;"><span style="letter-spacing:-0.386px">2E-9</span></div>
<div class="t" style="left:1655.19px;top:395.50px;font-size:12.00px;line-height:18px;height:18px;color:#8fbc8f;"><span style="letter-spacing:-0.386px">1E-9</span></div>
<div class="t" style="left:1672.53px;top:427.00px;font-size:12.00px;line-height:18px;height:18px;color:#8fbc8f;"><span style="letter-spacing:-0.205px">0</span></div>
<div class="r" style="left:1675.3px;top:435.3px;width:22px;height:17px;overflow:hidden;">
<div class="t" style="left:-2.21px;top:-1.00px;font-size:12.00px;line-height:18px;height:18px;color:#333;"><span style="letter-spacing:-0.416px">6:40.</span></div>
</div>
<div class="r" style="left:1701.9px;top:435.3px;width:22px;height:17px;overflow:hidden;">
<div class="t" style="left:-2.21px;top:-1.00px;font-size:12.00px;line-height:18px;height:18px;color:#333;"><span style="letter-spacing:-0.416px">0:00.</span></div>
</div>
<div class="r" style="left:1728.5px;top:435.3px;width:22px;height:17px;overflow:hidden;">
<div class="t" style="left:-2.21px;top:-1.00px;font-size:12.00px;line-height:18px;height:18px;color:#333;"><span style="letter-spacing:-0.416px">3:20.</span></div>
</div>
<svg class="r" style="left:1700px;top:260px;" width="45" height="180" viewBox="0 0 45 180">
<path d="M4,174.5 H28 L31,12 L33,165 L36.5,174" fill="none" stroke="#f0b030" stroke-width="1"/>
<path d="M13,174.8 H19" stroke="#f01010" stroke-width="1.2"/>
<path d="M30.3,174 V12 L31.5,6 L32.5,12 V174 Z" fill="none" stroke="#0a0af0" stroke-width="1.4"/>
</svg>
<div class="t" style="left:1723.00px;top:247.00px;font-size:12.00px;line-height:18px;height:18px;color:#1010f0;"><span style="letter-spacing:0.287px">M1</span></div>
<div class="t" style="left:1709.00px;top:414.00px;font-size:12.00px;line-height:18px;height:18px;color:#f01010;"><span style="letter-spacing:-0.917px">S1</span></div>
<div class="r" style="left:1771px;top:228px;width:94px;height:48px;background:linear-gradient(#f2f2f2,#dfdfdf);border:1px solid #c2c2c2;box-shadow:0 1px 6px rgba(0,0,0,0.30);"></div>
<svg class="r" style="left:1779px;top:236.0px;" width="13.5" height="13.5" viewBox="0 0 13.5 13.5"><rect x="0.65" y="0.65" width="12.2" height="12.2" fill="#fff" stroke="#555" stroke-width="1.3"/><path d="M2.6,6.8 L5.6,10 L10.6,2.8" fill="none" stroke="#111" stroke-width="2.1"/></svg>
<div class="r" style="left:1801.6px;top:241.8px;width:16.4px;height:2px;background:#b5d4b5;"></div>
<div class="t" style="left:1825.56px;top:231.90px;font-size:12.00px;line-height:18px;height:18px;color:#8fbc8f;"><span style="letter-spacing:-0.205px">64</span></div>
<svg class="r" style="left:1843.5px;top:233.5px;" width="13" height="13" viewBox="0 0 13 13"><circle cx="6.5" cy="6.5" r="5.7" fill="#fff" stroke="#333" stroke-width="1"/><circle cx="6.5" cy="6.5" r="3" fill="#111"/></svg>
<svg class="r" style="left:1779px;top:254.99999999999997px;" width="13.5" height="13.5" viewBox="0 0 13.5 13.5"><rect x="0.65" y="0.65" width="12.2" height="12.2" fill="#fff" stroke="#555" stroke-width="1.3"/><path d="M2.6,6.8 L5.6,10 L10.6,2.8" fill="none" stroke="#111" stroke-width="2.1"/></svg>
<div class="r" style="left:1801.6px;top:260.79999999999995px;width:16.4px;height:2px;background:#f5c36a;"></div>
<div class="t" style="left:1825.56px;top:250.90px;font-size:12.00px;line-height:18px;height:18px;color:#f09a10;"><span style="letter-spacing:-0.205px">66</span></div>
<svg class="r" style="left:1843.5px;top:252.49999999999997px;" width="13" height="13" viewBox="0 0 13 13"><circle cx="6.5" cy="6.5" r="5.7" fill="#fff" stroke="#333" stroke-width="1"/></svg>
<div class="r" style="left:1034px;top:474px;width:880px;height:4px;background:#e9e9e9;"></div>
<div class="t" style="left:1039.00px;top:486.00px;font-size:16.60px;line-height:23px;height:23px;color:#444;word-spacing:0.045px;"><span style="letter-spacing:-0.019px">Data</span> <span style="letter-spacing:-0.216px">Analysis</span></div>
<div class="r" style="left:1039px;top:507px;width:870px;height:1px;background:#d4d4d4;"></div>
<svg class="r" style="left:1867px;top:490px;" width="11" height="12" viewBox="0 0 11 12"><path d="M2.5,5 V3.5 C2.5,0 8.5,0 8.5,3.5 V5" fill="none" stroke="#777" stroke-width="1.2"/><rect x="0.8" y="5.2" width="9.4" height="5.6" fill="#fff" stroke="#777" stroke-width="1.3"/></svg>
<svg class="r" style="left:1892px;top:492px;" width="9" height="8" viewBox="0 0 9 8"><path d="M0.6,0.5 L8,7 M8,0.5 L0.6,7" stroke="#666" stroke-width="1.4"/></svg>
<div class="r" style="left:1047px;top:514px;width:61px;height:22px;background:#fff;border:1px solid #dadada;border-bottom:none;border-radius:3px 3px 0 0;"></div>
<div class="t" style="left:1052.80px;top:516.00px;font-size:12.30px;line-height:18px;height:18px;color:#444;"><span style="letter-spacing:-0.147px">Summary</span></div>
<div class="r" style="left:1181px;top:514px;width:31px;height:22px;background:#fff;border:1px solid #dadada;border-bottom:none;border-radius:3px 3px 0 0;"></div>
<div class="t" style="left:1184.00px;top:516.00px;font-size:12.30px;line-height:18px;height:18px;color:#444;"><span style="letter-spacing:-0.560px">TCD</span></div>
<div class="r" style="left:1213px;top:514px;width:109px;height:22px;background:#fff;border:1px solid #dadada;border-bottom:none;border-radius:3px 3px 0 0;"></div>
<div class="t" style="left:1219.00px;top:516.00px;font-size:12.30px;line-height:18px;height:18px;color:#444;word-spacing:-0.147px;"><span style="letter-spacing:-0.296px">Log</span> <span style="letter-spacing:-0.570px">Messages</span></div>
<div class="r" style="left:1039px;top:535px;width:870px;height:462px;background:#fff;border:1px solid #c9c9c9;"></div>
<div class="r" style="left:1108px;top:512px;width:73px;height:25px;background:#fff;border:1px solid #8e97aa;border-bottom:none;border-radius:3px 3px 0 0;z-index:3;"></div>
<div class="t" style="left:1116.00px;top:515.00px;font-size:12.30px;line-height:18px;height:18px;color:#222;word-spacing:-0.149px;z-index:4;"><span style="letter-spacing:-0.841px">Peaks</span> <span style="letter-spacing:-0.341px">(N2)</span></div>
<svg class="r" style="left:1301px;top:518px;" width="16" height="15" viewBox="0 0 16 15"><path d="M8,1.2 L15,13.8 H1 Z" fill="#fff" stroke="#e8822a" stroke-width="1.4" stroke-linejoin="round"/><path d="M8,5.5 V10" stroke="#e8822a" stroke-width="1.5"/><rect x="7.2" y="11" width="1.6" height="1.5" fill="#e8822a"/></svg>
<div class="r" style="left:1040px;top:536px;width:868px;height:22px;background:linear-gradient(#ffffff 0%,#ffffff 28%,#f2f3f6 48%,#eff0f3 100%);"></div>
<div class="r" style="left:1040px;top:558px;width:868px;height:1px;background:#d8d8d8;"></div>
<div class="r" style="left:1059px;top:536px;width:1px;height:22px;background:#cfcfcf;"></div>
<div class="r" style="left:1179px;top:536px;width:1px;height:22px;background:#cfcfcf;"></div>
<div class="r" style="left:1299px;top:536px;width:1px;height:22px;background:#cfcfcf;"></div>
<div class="r" style="left:1419px;top:536px;width:1px;height:22px;background:#cfcfcf;"></div>
<div class="r" style="left:1539px;top:536px;width:1px;height:22px;background:#cfcfcf;"></div>
<div class="r" style="left:1659px;top:536px;width:1px;height:22px;background:#cfcfcf;"></div>
<div class="r" style="left:1779px;top:536px;width:1px;height:22px;background:#cfcfcf;"></div>
<div class="r" style="left:1899px;top:536px;width:1px;height:22px;background:#cfcfcf;"></div>
<svg class="r" style="left:1042.5px;top:541px;" width="15" height="15" viewBox="0 0 15 15"><rect x="3.5" y="0.5" width="10" height="9" fill="#fff" stroke="#6a6a6a"/><path d="M3.5,3.5 H13.5 M3.5,6.5 H13.5" stroke="#6a6a6a" stroke-width="1"/><rect x="0.5" y="4.5" width="6" height="9" fill="#fff" stroke="#6a6a6a"/><path d="M0.5,7.5 H6.5 M0.5,10.5 H6.5" stroke="#6a6a6a" stroke-width="1"/><path d="M3,5.8 C6,6 7.5,5 8,2.5" fill="none" stroke="#111" stroke-width="1.3"/><path d="M6,3.6 L8.2,1 L10.4,3.6 Z" fill="#111"/></svg>
<div class="t" style="left:1067.00px;top:537.00px;font-size:12.00px;line-height:18px;height:18px;color:#111;word-spacing:-0.047px;"><span style="letter-spacing:-0.572px">Peak</span> <span style="letter-spacing:0.120px">Id</span></div>
<div class="t" style="left:1187.00px;top:537.00px;font-size:12.00px;line-height:18px;height:18px;color:#111;"><span style="letter-spacing:-0.060px">Time</span></div>
<div class="t" style="left:1307.00px;top:537.00px;font-size:12.00px;line-height:18px;height:18px;color:#111;"><span style="letter-spacing:0.271px">Width</span></div>
<div class="t" style="left:1427.00px;top:537.00px;font-size:12.00px;line-height:18px;height:18px;color:#111;word-spacing:-0.047px;"><span style="letter-spacing:0.154px">Height</span> <span style="letter-spacing:-0.225px">(nA)</span></div>
<div class="t" style="left:1622.45px;top:537.00px;font-size:12.00px;line-height:18px;height:18px;color:#111;"><span style="letter-spacing:0.104px">29/28</span></div>
<div class="t" style="left:1734.06px;top:537.00px;font-size:12.00px;line-height:18px;height:18px;color:#111;word-spacing:-0.047px;"><span style="letter-spacing:0.310px">N</span> <span style="letter-spacing:-0.666px">(Gas)</span></div>
<div class="t" style="left:1725.52px;top:538.00px;font-size:7.00px;line-height:11px;height:11px;color:#111;"><span style="letter-spacing:-0.120px">15</span></div>
<div class="t" style="left:1718.09px;top:537.00px;font-size:12.00px;line-height:18px;height:18px;color:#111;"><span style="letter-spacing:0.293px">δ</span></div>
<div class="t" style="left:1807.78px;top:537.00px;font-size:12.00px;line-height:18px;height:18px;color:#111;word-spacing:-0.047px;"><span style="letter-spacing:0.104px">29/28</span> <span style="letter-spacing:-0.692px">Raw</span> <span style="letter-spacing:-0.232px">(raw)</span></div>
<div class="r" style="left:1060px;top:579px;width:848px;height:20px;background:#f3f3f3;"></div>
<div class="t" style="left:1162.26px;top:558.00px;font-size:12.00px;line-height:18px;height:18px;color:#1a1a9a;"><span style="letter-spacing:0.287px">M1</span></div>
<div class="t" style="left:1263.64px;top:558.00px;font-size:12.00px;line-height:18px;height:18px;color:#222;"><span style="letter-spacing:-0.597px">00:56.1</span></div>
<div class="t" style="left:1383.64px;top:558.00px;font-size:12.00px;line-height:18px;height:18px;color:#222;"><span style="letter-spacing:-0.597px">00:17.9</span></div>
<div class="t" style="left:1506.43px;top:558.00px;font-size:12.00px;line-height:18px;height:18px;color:#222;"><span style="letter-spacing:-0.555px">6.8760</span></div>
<div class="t" style="left:1597.11px;top:558.00px;font-size:12.00px;line-height:18px;height:18px;color:#222;"><span style="letter-spacing:-0.586px">7.1994E-003</span></div>
<div class="t" style="left:1746.22px;top:558.00px;font-size:12.00px;line-height:18px;height:18px;color:#222;"><span style="letter-spacing:-0.375px">-28.00</span></div>
<div class="t" style="left:1877.38px;top:558.00px;font-size:12.00px;line-height:18px;height:18px;color:#222;"><span style="letter-spacing:-0.585px">0.00</span></div>
<div class="t" style="left:1166.66px;top:578.00px;font-size:12.00px;line-height:18px;height:18px;color:#a01818;"><span style="letter-spacing:-0.917px">S1</span></div>
<div class="t" style="left:1263.64px;top:578.00px;font-size:12.00px;line-height:18px;height:18px;color:#222;"><span style="letter-spacing:-0.597px">03:06.5</span></div>
<div class="t" style="left:1383.64px;top:578.00px;font-size:12.00px;line-height:18px;height:18px;color:#222;"><span style="letter-spacing:-0.597px">00:36.5</span></div>
<div class="t" style="left:1506.43px;top:578.00px;font-size:12.00px;line-height:18px;height:18px;color:#222;"><span style="letter-spacing:-0.555px">4.3619</span></div>
<div class="t" style="left:1597.11px;top:578.00px;font-size:12.00px;line-height:18px;height:18px;color:#222;"><span style="letter-spacing:-0.586px">7.3691E-003</span></div>
<div class="t" style="left:1752.40px;top:578.00px;font-size:12.00px;line-height:18px;height:18px;color:#222;"><span style="letter-spacing:-0.350px">-5.09</span></div>
<div class="t" style="left:1871.20px;top:578.00px;font-size:12.00px;line-height:18px;height:18px;color:#222;"><span style="letter-spacing:-0.567px">23.57</span></div>
<div class="r" style="left:1040px;top:979px;width:868px;height:17px;background:#f0f0f0;"></div>
<div class="r" style="left:1057px;top:979px;width:739px;height:17px;background:#cdcdcd;"></div>
<svg class="r" style="left:1045px;top:983px;" width="6" height="9" viewBox="0 0 6 9"><path d="M5,0.5 L1,4.5 L5,8.5" fill="none" stroke="#a0a0a0" stroke-width="1.2"/></svg>
<svg class="r" style="left:1897px;top:983px;" width="6" height="9" viewBox="0 0 6 9"><path d="M1,0.5 L5,4.5 L1,8.5" fill="none" stroke="#707070" stroke-width="1.2"/></svg>
<div class="r" style="left:1034px;top:1004px;width:880px;height:1px;background:#8c8c8c;"></div>
<div class="r" style="left:1036px;top:1005px;width:98px;height:19px;background:linear-gradient(#c6c6c6,#eeeeee 70%,#f2f2f2);border:1px solid #7d8496;border-top:none;"></div>
<div class="t" style="left:1039.00px;top:1005.00px;font-size:12.00px;line-height:18px;height:18px;color:#333;word-spacing:-0.080px;"><span style="letter-spacing:-0.382px">System</span> <span style="letter-spacing:-0.433px">Messages</span></div>
<div class="r" style="left:1133px;top:1005px;width:79px;height:21px;background:linear-gradient(#d2d2d2,#f0f0f0 60%,#f6f6f6);border:1px solid #7d8496;border-top:none;"></div>
<div class="t" style="left:1137.00px;top:1003.00px;font-size:12.00px;line-height:18px;height:18px;color:#222;word-spacing:-0.047px;"><span style="letter-spacing:-0.163px">Data</span> <span style="letter-spacing:-0.284px">Analysis</span></div>
</div></body></html>
